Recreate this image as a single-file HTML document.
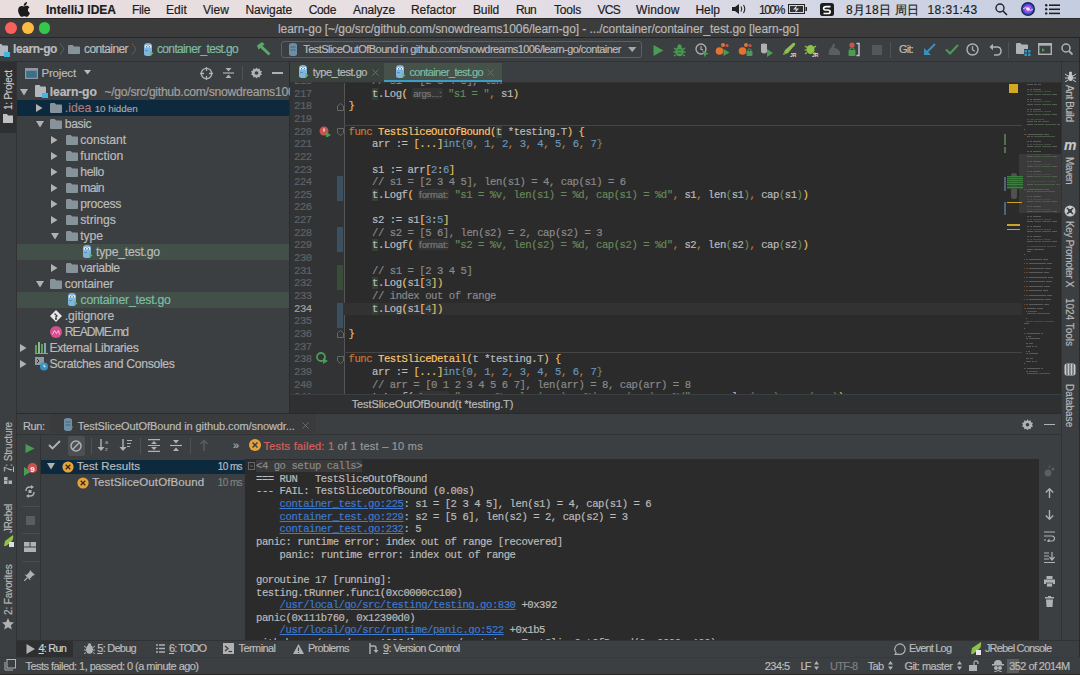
<!DOCTYPE html><html><head><meta charset="utf-8"><style>
html,body{margin:0;padding:0;width:1080px;height:675px;overflow:hidden;background:#3c3f41;position:relative;font-family:"Liberation Sans",sans-serif;}
.c{position:absolute;font-family:"Liberation Mono",monospace;font-size:10.6px;letter-spacing:-0.46px;white-space:pre;color:#b8bcc0;line-height:12.65px;}
.k{color:#cc7832}.fn{color:#ffc66d}.s{color:#6a8759}.n{color:#6897bb}.cm{color:#8a8a8a}.y{color:#e8bf6a}.g{color:#6a8759}
.hint{font-family:"Liberation Sans",sans-serif;font-size:9.5px;letter-spacing:-0.1px;color:#7c7c7c;background:#333435;border-radius:2px;padding:0 1.5px;margin:0 5px 0 4.2px;display:inline-block;line-height:11px;}
.lk{color:#3e7ad0;text-decoration:underline;}
div{-webkit-text-stroke:0.18px currentColor;}
</style></head><body>
<div style="position:absolute;left:0px;top:0px;width:1080px;height:18px;background:linear-gradient(to right,#e9dddd 0%,#e7dfe2 40%,#e3dde4 50%,#d9d9e5 67%,#cfd4e3 82%,#c5cde0 100%);"></div>
<svg style="position:absolute;left:17px;top:2px;" width="13" height="15" viewBox="0 0 13 15"><path d="M9.2 2.4c.6-.8 1-1.8.9-2.4-.9 0-1.9.6-2.5 1.3-.5.6-1 1.6-.9 2.5 1 .1 1.9-.5 2.5-1.4zM10.9 8c0-1.8 1.5-2.7 1.6-2.7-.9-1.3-2.2-1.5-2.7-1.5-1.1-.1-2.2.7-2.8.7-.6 0-1.5-.7-2.4-.6C3.4 3.9 2.3 4.6 1.7 5.7.4 7.9 1.4 11.2 2.6 13c.6.9 1.3 1.9 2.3 1.8.9 0 1.3-.6 2.4-.6s1.4.6 2.4.6c1 0 1.6-.9 2.2-1.8.7-1 1-2 1-2.1 0 0-2-.8-2-2.9z" fill="#1a1a1a"/></svg>
<div id="t1" style="position:absolute;left:46px;top:1.8px;font-family:'Liberation Sans', sans-serif;font-size:12px;line-height:16px;color:#1c1c1c;font-weight:bold;white-space:pre;letter-spacing:-0.001px;">IntelliJ IDEA</div>
<div id="t2" style="position:absolute;left:132px;top:1.8px;font-family:'Liberation Sans', sans-serif;font-size:12px;line-height:16px;color:#1c1c1c;font-weight:normal;white-space:pre;letter-spacing:-0.336px;">File</div>
<div id="t3" style="position:absolute;left:166px;top:1.8px;font-family:'Liberation Sans', sans-serif;font-size:12px;line-height:16px;color:#1c1c1c;font-weight:normal;white-space:pre;letter-spacing:0.078px;">Edit</div>
<div id="t4" style="position:absolute;left:203px;top:1.8px;font-family:'Liberation Sans', sans-serif;font-size:12px;line-height:16px;color:#1c1c1c;font-weight:normal;white-space:pre;letter-spacing:0.051px;">View</div>
<div id="t5" style="position:absolute;left:245.5px;top:1.8px;font-family:'Liberation Sans', sans-serif;font-size:12px;line-height:16px;color:#1c1c1c;font-weight:normal;white-space:pre;letter-spacing:-0.109px;">Navigate</div>
<div id="t6" style="position:absolute;left:308.75px;top:1.8px;font-family:'Liberation Sans', sans-serif;font-size:12px;line-height:16px;color:#1c1c1c;font-weight:normal;white-space:pre;letter-spacing:-0.359px;">Code</div>
<div id="t7" style="position:absolute;left:353px;top:1.8px;font-family:'Liberation Sans', sans-serif;font-size:12px;line-height:16px;color:#1c1c1c;font-weight:normal;white-space:pre;letter-spacing:-0.100px;">Analyze</div>
<div id="t8" style="position:absolute;left:411px;top:1.8px;font-family:'Liberation Sans', sans-serif;font-size:12px;line-height:16px;color:#1c1c1c;font-weight:normal;white-space:pre;letter-spacing:-0.045px;">Refactor</div>
<div id="t9" style="position:absolute;left:473px;top:1.8px;font-family:'Liberation Sans', sans-serif;font-size:12px;line-height:16px;color:#1c1c1c;font-weight:normal;white-space:pre;letter-spacing:-0.138px;">Build</div>
<div id="t10" style="position:absolute;left:516px;top:1.8px;font-family:'Liberation Sans', sans-serif;font-size:12px;line-height:16px;color:#1c1c1c;font-weight:normal;white-space:pre;letter-spacing:-0.672px;">Run</div>
<div id="t11" style="position:absolute;left:554px;top:1.8px;font-family:'Liberation Sans', sans-serif;font-size:12px;line-height:16px;color:#1c1c1c;font-weight:normal;white-space:pre;letter-spacing:-0.203px;">Tools</div>
<div id="t12" style="position:absolute;left:597.5px;top:1.8px;font-family:'Liberation Sans', sans-serif;font-size:12px;line-height:16px;color:#1c1c1c;font-weight:normal;white-space:pre;letter-spacing:-0.729px;">VCS</div>
<div id="t13" style="position:absolute;left:636px;top:1.8px;font-family:'Liberation Sans', sans-serif;font-size:12px;line-height:16px;color:#1c1c1c;font-weight:normal;white-space:pre;letter-spacing:0.135px;">Window</div>
<div id="t14" style="position:absolute;left:695.5px;top:1.8px;font-family:'Liberation Sans', sans-serif;font-size:12px;line-height:16px;color:#1c1c1c;font-weight:normal;white-space:pre;letter-spacing:-0.047px;">Help</div>
<svg style="position:absolute;left:732px;top:4px;" width="15" height="10" viewBox="0 0 15 10"><path d="M0 3h3l4-3v10l-4-3H0z" fill="#222"/><path d="M9 2.5q1.5 2.5 0 5M11.5 1q2.5 4 0 8" stroke="#222" stroke-width="1.1" fill="none"/></svg>
<div id="t15" style="position:absolute;left:759px;top:1.8px;font-family:'Liberation Sans', sans-serif;font-size:12px;line-height:16px;color:#1c1c1c;font-weight:normal;white-space:pre;letter-spacing:-1.426px;">100%</div>
<svg style="position:absolute;left:788px;top:4px;" width="20" height="10" viewBox="0 0 20 10"><rect x="0.5" y="0.5" width="16" height="9" fill="none" stroke="#222" stroke-width="1"/><rect x="17.5" y="3" width="1.5" height="4" fill="#222"/><rect x="2" y="2" width="13" height="6" fill="#333"/><path d="M9 1L5 5.5h3L7 9l4-4.5H8z" fill="#d9d9e5"/></svg>
<svg style="position:absolute;left:820px;top:3px;" width="14" height="13" viewBox="0 0 14 13"><rect width="14" height="13" rx="2.5" fill="#1e1e1e"/><path d="M10.5 3.6H6.2Q3.6 3.6 3.6 5.3T6.2 7h1.6q2.4 0 2.4 1.7T7.8 10.5H3.5" stroke="#fff" stroke-width="1.6" fill="none"/></svg>
<div id="t16" style="position:absolute;left:846px;top:1.8px;font-family:'Liberation Sans', sans-serif;font-size:12px;line-height:16px;color:#1c1c1c;font-weight:normal;white-space:pre;letter-spacing:0.205px;">8月18日 周日</div>
<div id="t17" style="position:absolute;left:927.5px;top:1.8px;font-family:'Liberation Sans', sans-serif;font-size:12px;line-height:16px;color:#1c1c1c;font-weight:normal;white-space:pre;letter-spacing:0.410px;">18:31:43</div>
<svg style="position:absolute;left:995px;top:3px;" width="13" height="13" viewBox="0 0 13 13"><circle cx="5" cy="5" r="4" stroke="#222" stroke-width="1.4" fill="none"/><path d="M8 8l4 4" stroke="#222" stroke-width="1.6"/></svg>
<svg style="position:absolute;left:1021px;top:2px;" width="14" height="14" viewBox="0 0 14 14"><circle cx="7" cy="7" r="7" fill="#1c2450"/><circle cx="7" cy="7" r="5.6" fill="#3a52d8"/><circle cx="7" cy="7" r="3.8" fill="#b050e0"/><circle cx="7" cy="7" r="1.8" fill="#e8e0ff"/><path d="M2 7q2.5-3 5 0t5 0" stroke="#fff" stroke-width="0.9" fill="none" opacity="0.8"/></svg>
<svg style="position:absolute;left:1045px;top:4px;" width="16" height="11" viewBox="0 0 16 11"><g fill="#222"><circle cx="1.2" cy="1.2" r="1.2"/><circle cx="1.2" cy="5.3" r="1.2"/><circle cx="1.2" cy="9.4" r="1.2"/><rect x="4" y="0.4" width="11" height="1.6"/><rect x="4" y="4.5" width="11" height="1.6"/><rect x="4" y="8.6" width="11" height="1.6"/></g></svg>
<div style="position:absolute;left:0px;top:18px;width:1080px;height:19px;background:#3c3c3c;"></div>
<div style="position:absolute;left:0px;top:18px;width:1080px;height:1px;background:#2a2a2a;"></div>
<div style="position:absolute;left:0px;top:36.5px;width:1080px;height:1px;background:#262626;"></div>
<div style="position:absolute;left:5.4px;top:22.4px;width:11.2px;height:11.2px;border-radius:6px;background:#fc605c;"></div>
<div style="position:absolute;left:22.4px;top:22.4px;width:11.2px;height:11.2px;border-radius:6px;background:#fdbc40;"></div>
<div style="position:absolute;left:38.9px;top:22.4px;width:11.2px;height:11.2px;border-radius:6px;background:#34c84a;"></div>
<div id="t18" style="position:absolute;left:278px;top:21px;font-family:'Liberation Sans', sans-serif;font-size:12px;line-height:16px;color:#b8b8b8;font-weight:normal;white-space:pre;letter-spacing:-0.064px;">learn-go [~/go/src/github.com/snowdreams1006/learn-go] - .../container/container_test.go [learn-go]</div>
<div style="position:absolute;left:0px;top:37.5px;width:1080px;height:23.5px;background:#3c3f41;"></div>
<div style="position:absolute;left:0px;top:60.5px;width:1080px;height:1px;background:#323232;"></div>
<svg style="position:absolute;left:-3px;top:44px;" width="14" height="13" viewBox="0 0 14 13"><path d="M0 1Q0 0 1 0H4.5l1 1.4H10Q11 1.4 11 2.4V8H7V12H1Q0 12 0 11z" fill="#b0b8bd"/><rect x="7" y="8" width="6" height="5" fill="#40b6e0"/></svg>
<div id="t19" style="position:absolute;left:13px;top:38px;font-family:'Liberation Sans', sans-serif;font-size:12px;line-height:22px;color:#bbbbbb;font-weight:bold;white-space:pre;letter-spacing:-0.418px;">learn-go</div>
<svg style="position:absolute;left:59px;top:42px;" width="6" height="14" viewBox="0 0 6 14"><path d="M1 1l4 6-4 6" stroke="#5a5d5f" stroke-width="1" fill="none"/></svg>
<svg style="position:absolute;left:68px;top:45px;" width="12" height="9" viewBox="0 0 12 9"><path d="M0 1.2Q0 0 1.2 0H4.8l1.2 1.6H11Q12 1.6 12 2.8V8.2Q12 9 11 9H1Q0 9 0 8z" fill="#87939a"/></svg>
<div id="t20" style="position:absolute;left:84px;top:38px;font-family:'Liberation Sans', sans-serif;font-size:12px;line-height:22px;color:#bbbbbb;font-weight:normal;white-space:pre;letter-spacing:-0.597px;">container</div>
<svg style="position:absolute;left:131px;top:42px;" width="6" height="14" viewBox="0 0 6 14"><path d="M1 1l4 6-4 6" stroke="#5a5d5f" stroke-width="1" fill="none"/></svg>
<svg style="position:absolute;left:142px;top:43px;" width="12" height="13" viewBox="0 0 12 13"><path d="M2 3Q2 0 6 0T10 3V11Q10 13 6 13T2 11z" fill="#7fb6e0"/><circle cx="4.3" cy="3.6" r="1.4" fill="#fff"/><circle cx="7.7" cy="3.6" r="1.4" fill="#fff"/><circle cx="4.5" cy="3.8" r=".6" fill="#222"/><circle cx="7.5" cy="3.8" r=".6" fill="#222"/><path d="M8.5 8l3 2.2-3 2.2z" fill="#5fb85f"/><path d="M3 7h3v1H3z" fill="#5a8fc0"/></svg>
<div id="t21" style="position:absolute;left:157px;top:38px;font-family:'Liberation Sans', sans-serif;font-size:12px;line-height:22px;color:#7dbda4;font-weight:normal;white-space:pre;letter-spacing:-0.651px;">container_test.go</div>
<svg style="position:absolute;left:256px;top:42px;" width="16" height="14" viewBox="0 0 16 14"><path d="M1 3.5L6 0l2.5 2.2-2 1.6 8 7.6-2 2.2-8-7.5-2 1.5z" fill="#59a869"/></svg>
<div style="position:absolute;left:280.5px;top:40.5px;width:361px;height:17.5px;border:1px solid #5e6060;border-radius:3px;background:#3c3f41;box-sizing:border-box;"></div>
<svg style="position:absolute;left:288px;top:43px;" width="10" height="13" viewBox="0 0 10 13"><path d="M1 2Q1 0 5 0T9 2V11Q9 13 5 13T1 11z" fill="#6e8ea6"/><path d="M2.5 4h5M2.5 7h5" stroke="#4a6376" stroke-width="1"/></svg>
<div id="t22" style="position:absolute;left:303.3px;top:40px;font-family:'Liberation Sans', sans-serif;font-size:11px;line-height:18px;color:#bbbbbb;font-weight:normal;white-space:pre;letter-spacing:-0.561px;">TestSliceOutOfBound in github.com/snowdreams1006/learn-go/container</div>
<svg style="position:absolute;left:628px;top:47px;" width="9" height="6" viewBox="0 0 9 6"><path d="M0 0h8.5L4.25 5z" fill="#a8a8a8"/></svg>
<svg style="position:absolute;left:653px;top:45px;" width="11" height="11" viewBox="0 0 11 11"><path d="M0.5 0v11l10-5.5z" fill="#499c54"/></svg>
<svg style="position:absolute;left:673px;top:43.5px;" width="13" height="13" viewBox="0 0 13 13"><ellipse cx="6.5" cy="7.5" rx="4" ry="4.8" fill="#499c54"/><path d="M1 4l2 1.5M12 4l-2 1.5M0.5 8h2.5M12.5 8H10M1 12l2-1.5M12 12l-2-1.5" stroke="#499c54" stroke-width="1.3"/><path d="M4.5 6h4M4.5 9h4" stroke="#2f5234" stroke-width="1"/><circle cx="6.5" cy="2.2" r="2" fill="#499c54"/></svg>
<svg style="position:absolute;left:695px;top:43px;" width="15" height="15" viewBox="0 0 15 15"><circle cx="6" cy="6" r="5" stroke="#b0b0b0" stroke-width="1.3" fill="none"/><path d="M6 3v3.5h2" stroke="#b0b0b0" stroke-width="1.1" fill="none"/><path d="M7 7l7 4-3 .5-1 3z" fill="#499c54"/></svg>
<svg style="position:absolute;left:715px;top:42px;" width="15" height="15" viewBox="0 0 15 15"><circle cx="4.5" cy="9" r="3.8" fill="#e5722f"/><circle cx="8" cy="3" r="2" fill="#e5722f"/><circle cx="12" cy="3.5" r="1.6" fill="#c75450"/><path d="M8.5 7v7l6-3.5z" fill="#499c54"/></svg>
<svg style="position:absolute;left:738px;top:42px;" width="15" height="15" viewBox="0 0 15 15"><circle cx="4.5" cy="9" r="3.8" fill="#e5722f"/><circle cx="8" cy="3" r="2" fill="#e5722f"/><circle cx="12" cy="3.5" r="1.6" fill="#c75450"/><rect x="8.5" y="9" width="6" height="5" rx="1" fill="#499c54"/><path d="M10 9V7.5Q11.5 6 13 7.5V9" stroke="#499c54" fill="none"/></svg>
<svg style="position:absolute;left:760px;top:43px;" width="14" height="14" viewBox="0 0 14 14"><path d="M1 1Q4 0 7 1V9Q4 12 1 9z" fill="#b0b0b0"/><path d="M7 6v8l6-4z" fill="#499c54"/></svg>
<svg style="position:absolute;left:782px;top:42px;" width="15" height="15" viewBox="0 0 15 15"><path d="M1 13L3 8 11 1Q14 0 13 3L6 11z" fill="#8fc14a"/><path d="M1 13l3-1-2-2z" fill="#6a9a3a"/><text x="8" y="14.5" font-family="Liberation Sans" font-size="5" fill="#ddd" font-weight="bold">JR</text></svg>
<svg style="position:absolute;left:804px;top:42px;" width="15" height="15" viewBox="0 0 15 15"><ellipse cx="6.5" cy="7.5" rx="4" ry="4.5" fill="#8fc14a"/><path d="M1 4l2 1.5M12 4l-2 1.5M0.5 8h2.5M12 12l-2-1.5M1 12l2-1.5" stroke="#8fc14a" stroke-width="1.2"/><text x="8" y="14.5" font-family="Liberation Sans" font-size="5" fill="#ddd" font-weight="bold">JR</text></svg>
<svg style="position:absolute;left:827px;top:43px;" width="14" height="13" viewBox="0 0 14 13"><path d="M2 12Q1 7 4 5L6 1Q8 0 8 2L7 5Q11 5 13 9V12z" fill="#5a5e60"/></svg>
<svg style="position:absolute;left:848px;top:42px;" width="12" height="15" viewBox="0 0 12 15"><circle cx="4" cy="3" r="2.6" fill="#c75450"/><rect x="0.5" y="8" width="7" height="6" rx="1" fill="#499c54"/><path d="M2 8V6.5Q4 5 6 6.5V8" stroke="#499c54" fill="none"/><path d="M8.5 1.5h2.5v12H8.5" stroke="#c8c8c8" stroke-width="1.4" fill="none"/></svg>
<div style="position:absolute;left:872px;top:45px;width:10px;height:10px;background:#545759;"></div>
<div style="position:absolute;left:890px;top:42px;width:1px;height:16px;background:#4e5254;"></div>
<div id="t23" style="position:absolute;left:899px;top:40px;font-family:'Liberation Sans', sans-serif;font-size:11px;line-height:18px;color:#bbbbbb;font-weight:normal;white-space:pre;letter-spacing:-0.781px;">Git:</div>
<svg style="position:absolute;left:923px;top:43px;" width="13" height="13" viewBox="0 0 13 13"><path d="M12 1L3 10" stroke="#3592c4" stroke-width="1.8"/><path d="M1 5v7h7z" fill="#3592c4"/></svg>
<svg style="position:absolute;left:945px;top:44px;" width="14" height="11" viewBox="0 0 14 11"><path d="M1 5.5l4 4L13 1" stroke="#499c54" stroke-width="2" fill="none"/></svg>
<svg style="position:absolute;left:966px;top:43px;" width="13" height="13" viewBox="0 0 13 13"><circle cx="6.5" cy="6.5" r="5.5" stroke="#afb1b3" stroke-width="1.4" fill="none"/><path d="M6.5 3.2v3.5l2.3 1.6" stroke="#afb1b3" stroke-width="1.3" fill="none"/></svg>
<svg style="position:absolute;left:989px;top:43px;" width="13" height="13" viewBox="0 0 13 13"><path d="M3 4h5Q12 4 12 8T8 12H5" stroke="#afb1b3" stroke-width="1.5" fill="none"/><path d="M0.5 4L4 0.8V7.2z" fill="#afb1b3"/></svg>
<div style="position:absolute;left:1008px;top:42px;width:1px;height:16px;background:#4e5254;"></div>
<svg style="position:absolute;left:1016px;top:43px;" width="15" height="13" viewBox="0 0 15 13"><path d="M0 1Q0 0 1 0H4.5l1 1.5H11Q12 1.5 12 2.5V6H8V11H1Q0 11 0 10z" fill="#afb1b3"/><rect x="8.5" y="7" width="2.5" height="2.5" fill="#3592c4"/><rect x="12" y="7" width="2.5" height="2.5" fill="#3592c4"/><rect x="8.5" y="10.5" width="2.5" height="2.5" fill="#3592c4"/><rect x="12" y="10.5" width="2.5" height="2.5" fill="#3592c4"/></svg>
<svg style="position:absolute;left:1038px;top:43px;" width="14" height="12" viewBox="0 0 14 12"><rect x="0.7" y="0.7" width="12.6" height="10.6" stroke="#afb1b3" stroke-width="1.4" fill="none"/><rect x="0.7" y="0.7" width="12.6" height="2" fill="#afb1b3"/><path d="M4 5l3 2-3 2z" fill="#499c54"/></svg>
<svg style="position:absolute;left:1061px;top:43px;" width="12" height="12" viewBox="0 0 12 12"><circle cx="5" cy="5" r="4" stroke="#afb1b3" stroke-width="1.5" fill="none"/><path d="M8 8l3.5 3.5" stroke="#afb1b3" stroke-width="1.8"/></svg>
<div style="position:absolute;left:0px;top:61.5px;width:16px;height:596px;background:#3c3f41;"></div>
<div style="position:absolute;left:16px;top:61.5px;width:1px;height:596px;background:#323232;"></div>
<div style="position:absolute;left:0px;top:61.5px;width:16px;height:71px;background:#2d2f31;"></div>
<div id="v24" style="position:absolute;left:2.3px;top:109.6px;height:14px;transform-origin:0 0;transform:rotate(-90deg);font-family:'Liberation Sans',sans-serif;font-size:10px;line-height:14px;color:#c8c8c8;white-space:pre;letter-spacing:-0.245px;">1: Project</div>
<svg style="position:absolute;left:3px;top:114px;" width="10" height="9" viewBox="0 0 10 9"><path d="M0 0h4l1 1.5h5V9H0z" fill="#c0c0c0"/></svg>
<div id="v25" style="position:absolute;left:2.3px;top:471.5px;height:14px;transform-origin:0 0;transform:rotate(-90deg);font-family:'Liberation Sans',sans-serif;font-size:10px;line-height:14px;color:#b8b8b8;white-space:pre;letter-spacing:-0.142px;"><u>7</u>: Structure</div>
<svg style="position:absolute;left:4px;top:477px;" width="8" height="7" viewBox="0 0 8 7"><rect x="0" y="3.5" width="3.5" height="3.5" fill="#b0b0b0"/><rect x="4.5" y="3.5" width="3.5" height="3.5" fill="#b0b0b0"/><rect x="0" y="0" width="3.5" height="3" fill="#b0b0b0"/></svg>
<div id="v26" style="position:absolute;left:2.3px;top:532.5px;height:14px;transform-origin:0 0;transform:rotate(-90deg);font-family:'Liberation Sans',sans-serif;font-size:10px;line-height:14px;color:#b8b8b8;white-space:pre;letter-spacing:-0.357px;">JRebel</div>
<svg style="position:absolute;left:3px;top:535px;" width="11" height="12" viewBox="0 0 11 12"><path d="M1 11L2 6 10 0Q11 4 8 7L3 11z" fill="#8fc14a"/><rect x="6" y="7" width="5" height="5" fill="#ddd"/></svg>
<div id="v27" style="position:absolute;left:2.3px;top:615.3px;height:14px;transform-origin:0 0;transform:rotate(-90deg);font-family:'Liberation Sans',sans-serif;font-size:10px;line-height:14px;color:#b8b8b8;white-space:pre;letter-spacing:-0.146px;">2: Favorites</div>
<svg style="position:absolute;left:2px;top:618px;" width="12" height="12" viewBox="0 0 12 12"><path d="M6 0l1.8 4 4.2.4-3.2 2.8 1 4.3L6 9.2 2.2 11.5l1-4.3L0 4.4 4.2 4z" fill="#b0b0b0"/></svg>
<div style="position:absolute;left:17px;top:61.5px;width:272px;height:351px;background:#3c3f41;"></div>
<div style="position:absolute;left:288.5px;top:61.5px;width:1.5px;height:351px;background:#2b2b2b;"></div>
<svg style="position:absolute;left:25px;top:67.5px;" width="13" height="11" viewBox="0 0 13 11"><rect x="0.6" y="0.6" width="11.8" height="9.8" stroke="#8d9aa3" stroke-width="1.2" fill="#3c6f8a"/><rect x="0.6" y="0.6" width="11.8" height="2.2" fill="#8d9aa3"/></svg>
<div id="t28" style="position:absolute;left:41.5px;top:64px;font-family:'Liberation Sans', sans-serif;font-size:11.5px;line-height:18px;color:#bbbbbb;font-weight:normal;white-space:pre;letter-spacing:-0.200px;">Project</div>
<svg style="position:absolute;left:83.5px;top:70px;" width="7" height="5" viewBox="0 0 7 5"><path d="M0 0h7L3.5 4.5z" fill="#bbb"/></svg>
<svg style="position:absolute;left:199.5px;top:67px;" width="13" height="13" viewBox="0 0 13 13"><circle cx="6.5" cy="6.5" r="5.2" stroke="#afb1b3" stroke-width="1.3" fill="none"/><path d="M6.5 0v4M6.5 9v4M0 6.5h4M9 6.5h4" stroke="#afb1b3" stroke-width="1.3"/></svg>
<svg style="position:absolute;left:222.5px;top:67px;" width="11" height="12" viewBox="0 0 11 12"><path d="M0 6h11" stroke="#afb1b3" stroke-width="1.2"/><path d="M2.5 1h6L5.5 4.5zM2.5 11h6L5.5 7.5z" fill="#afb1b3"/></svg>
<div style="position:absolute;left:242px;top:66px;width:1px;height:14px;background:#4e5254;"></div>
<svg style="position:absolute;left:250.5px;top:67px;" width="11" height="12" viewBox="0 0 11 12"><path d="M5.5 0.5l1.2 1.6 2-.6.3 2 2 .8-1 1.7 1 1.7-2 .8-.3 2-2-.6-1.2 1.6-1.2-1.6-2 .6-.3-2-2-.8 1-1.7-1-1.7 2-.8.3-2 2 .6z" fill="#afb1b3"/><circle cx="5.5" cy="6" r="1.8" fill="#3c3f41"/></svg>
<div style="position:absolute;left:272px;top:72px;width:11px;height:1.5px;background:#afb1b3;"></div>
<div style="position:absolute;left:17px;top:99.8px;width:271.5px;height:16px;background:#0d293e;"></div>
<div style="position:absolute;left:17px;top:243.8px;width:271.5px;height:16px;background:#43504a;"></div>
<div style="position:absolute;left:17px;top:291.8px;width:271.5px;height:16px;background:#43504a;"></div>
<svg style="position:absolute;left:20px;top:88.8px;" width="8" height="7" viewBox="0 0 8 7"><path d="M0 0h8L4 6.5z" fill="#b2b2b2"/></svg>
<svg style="position:absolute;left:34.5px;top:85.3px;" width="14" height="13" viewBox="0 0 14 13"><path d="M0 1Q0 0 1 0H4.5l1 1.4H10Q11 1.4 11 2.4V8H7V12H1Q0 12 0 11z" fill="#b0b8bd"/><rect x="7" y="8" width="6" height="5" fill="#40b6e0"/></svg>
<div id="t29" style="position:absolute;left:49.8px;top:83.8px;font-family:'Liberation Sans', sans-serif;font-size:12.2px;line-height:16px;color:#bbbbbb;font-weight:bold;white-space:pre;letter-spacing:-0.147px;">learn-go</div>
<div id="t30" style="position:absolute;left:104.4px;top:83.8px;font-family:'Liberation Sans', sans-serif;font-size:12.2px;line-height:16px;color:#a0a0a0;font-weight:normal;white-space:pre;letter-spacing:-0.288px;">~/go/src/github.com/snowdreams100</div>
<svg style="position:absolute;left:35.5px;top:103.8px;" width="7" height="8" viewBox="0 0 7 8"><path d="M0 0v8l6.5-4z" fill="#b2b2b2"/></svg>
<svg style="position:absolute;left:50.0px;top:102.8px;" width="12" height="10" viewBox="0 0 12 10"><path d="M0 1.2Q0 0 1.2 0H4.8l1.2 1.6H11Q12 1.6 12 2.8V9.2Q12 10 11 10H1Q0 10 0 9z" fill="#87939a"/></svg>
<div style="position:absolute;left:64.8px;top:99.8px;font-family:'Liberation Sans', sans-serif;font-size:12.2px;line-height:16px;color:#bbbbbb;font-weight:normal;white-space:pre;"><span style="color:#b07a7a">.idea</span> <span style="font-size:9.8px;color:#a8a8a8">10 hidden</span></div>
<svg style="position:absolute;left:35.5px;top:120.8px;" width="8" height="7" viewBox="0 0 8 7"><path d="M0 0h8L4 6.5z" fill="#b2b2b2"/></svg>
<svg style="position:absolute;left:50.0px;top:118.8px;" width="12" height="10" viewBox="0 0 12 10"><path d="M0 1.2Q0 0 1.2 0H4.8l1.2 1.6H11Q12 1.6 12 2.8V9.2Q12 10 11 10H1Q0 10 0 9z" fill="#87939a"/></svg>
<div id="t31" style="position:absolute;left:64.8px;top:115.8px;font-family:'Liberation Sans', sans-serif;font-size:12.2px;line-height:16px;color:#bbbbbb;font-weight:normal;white-space:pre;letter-spacing:-0.411px;">basic</div>
<svg style="position:absolute;left:51.0px;top:135.8px;" width="7" height="8" viewBox="0 0 7 8"><path d="M0 0v8l6.5-4z" fill="#b2b2b2"/></svg>
<svg style="position:absolute;left:65.5px;top:134.8px;" width="12" height="10" viewBox="0 0 12 10"><path d="M0 1.2Q0 0 1.2 0H4.8l1.2 1.6H11Q12 1.6 12 2.8V9.2Q12 10 11 10H1Q0 10 0 9z" fill="#87939a"/></svg>
<div id="t32" style="position:absolute;left:80.3px;top:131.8px;font-family:'Liberation Sans', sans-serif;font-size:12.2px;line-height:16px;color:#bbbbbb;font-weight:normal;white-space:pre;letter-spacing:-0.035px;">constant</div>
<svg style="position:absolute;left:51.0px;top:151.8px;" width="7" height="8" viewBox="0 0 7 8"><path d="M0 0v8l6.5-4z" fill="#b2b2b2"/></svg>
<svg style="position:absolute;left:65.5px;top:150.8px;" width="12" height="10" viewBox="0 0 12 10"><path d="M0 1.2Q0 0 1.2 0H4.8l1.2 1.6H11Q12 1.6 12 2.8V9.2Q12 10 11 10H1Q0 10 0 9z" fill="#87939a"/></svg>
<div id="t33" style="position:absolute;left:80.3px;top:147.8px;font-family:'Liberation Sans', sans-serif;font-size:12.2px;line-height:16px;color:#bbbbbb;font-weight:normal;white-space:pre;letter-spacing:0.039px;">function</div>
<svg style="position:absolute;left:51.0px;top:167.8px;" width="7" height="8" viewBox="0 0 7 8"><path d="M0 0v8l6.5-4z" fill="#b2b2b2"/></svg>
<svg style="position:absolute;left:65.5px;top:166.8px;" width="12" height="10" viewBox="0 0 12 10"><path d="M0 1.2Q0 0 1.2 0H4.8l1.2 1.6H11Q12 1.6 12 2.8V9.2Q12 10 11 10H1Q0 10 0 9z" fill="#87939a"/></svg>
<div id="t34" style="position:absolute;left:80.3px;top:163.8px;font-family:'Liberation Sans', sans-serif;font-size:12.2px;line-height:16px;color:#bbbbbb;font-weight:normal;white-space:pre;letter-spacing:-0.430px;">hello</div>
<svg style="position:absolute;left:51.0px;top:183.8px;" width="7" height="8" viewBox="0 0 7 8"><path d="M0 0v8l6.5-4z" fill="#b2b2b2"/></svg>
<svg style="position:absolute;left:65.5px;top:182.8px;" width="12" height="10" viewBox="0 0 12 10"><path d="M0 1.2Q0 0 1.2 0H4.8l1.2 1.6H11Q12 1.6 12 2.8V9.2Q12 10 11 10H1Q0 10 0 9z" fill="#87939a"/></svg>
<div id="t35" style="position:absolute;left:80.3px;top:179.8px;font-family:'Liberation Sans', sans-serif;font-size:12.2px;line-height:16px;color:#bbbbbb;font-weight:normal;white-space:pre;letter-spacing:-0.705px;">main</div>
<svg style="position:absolute;left:51.0px;top:199.8px;" width="7" height="8" viewBox="0 0 7 8"><path d="M0 0v8l6.5-4z" fill="#b2b2b2"/></svg>
<svg style="position:absolute;left:65.5px;top:198.8px;" width="12" height="10" viewBox="0 0 12 10"><path d="M0 1.2Q0 0 1.2 0H4.8l1.2 1.6H11Q12 1.6 12 2.8V9.2Q12 10 11 10H1Q0 10 0 9z" fill="#87939a"/></svg>
<div id="t36" style="position:absolute;left:80.3px;top:195.8px;font-family:'Liberation Sans', sans-serif;font-size:12.2px;line-height:16px;color:#bbbbbb;font-weight:normal;white-space:pre;letter-spacing:-0.270px;">process</div>
<svg style="position:absolute;left:51.0px;top:215.8px;" width="7" height="8" viewBox="0 0 7 8"><path d="M0 0v8l6.5-4z" fill="#b2b2b2"/></svg>
<svg style="position:absolute;left:65.5px;top:214.8px;" width="12" height="10" viewBox="0 0 12 10"><path d="M0 1.2Q0 0 1.2 0H4.8l1.2 1.6H11Q12 1.6 12 2.8V9.2Q12 10 11 10H1Q0 10 0 9z" fill="#87939a"/></svg>
<div id="t37" style="position:absolute;left:80.3px;top:211.8px;font-family:'Liberation Sans', sans-serif;font-size:12.2px;line-height:16px;color:#bbbbbb;font-weight:normal;white-space:pre;letter-spacing:-0.058px;">strings</div>
<svg style="position:absolute;left:51.0px;top:232.8px;" width="8" height="7" viewBox="0 0 8 7"><path d="M0 0h8L4 6.5z" fill="#b2b2b2"/></svg>
<svg style="position:absolute;left:65.5px;top:230.8px;" width="12" height="10" viewBox="0 0 12 10"><path d="M0 1.2Q0 0 1.2 0H4.8l1.2 1.6H11Q12 1.6 12 2.8V9.2Q12 10 11 10H1Q0 10 0 9z" fill="#87939a"/></svg>
<div id="t38" style="position:absolute;left:80.3px;top:227.8px;font-family:'Liberation Sans', sans-serif;font-size:12.2px;line-height:16px;color:#bbbbbb;font-weight:normal;white-space:pre;letter-spacing:-0.087px;">type</div>
<svg style="position:absolute;left:81.0px;top:245.3px;" width="12" height="13" viewBox="0 0 12 13"><path d="M2 3Q2 0 6 0T10 3V11Q10 13 6 13T2 11z" fill="#7fb6e0"/><circle cx="4.3" cy="3.6" r="1.4" fill="#fff"/><circle cx="7.7" cy="3.6" r="1.4" fill="#fff"/><circle cx="4.5" cy="3.8" r=".6" fill="#222"/><circle cx="7.5" cy="3.8" r=".6" fill="#222"/><path d="M8.5 8l3 2.2-3 2.2z" fill="#5fb85f"/><path d="M3 7h3v1H3z" fill="#5a8fc0"/></svg>
<div id="t39" style="position:absolute;left:96.0px;top:243.8px;font-family:'Liberation Sans', sans-serif;font-size:12.2px;line-height:16px;color:#bbbbbb;font-weight:normal;white-space:pre;letter-spacing:-0.209px;">type_test.go</div>
<svg style="position:absolute;left:51.0px;top:263.8px;" width="7" height="8" viewBox="0 0 7 8"><path d="M0 0v8l6.5-4z" fill="#b2b2b2"/></svg>
<svg style="position:absolute;left:65.5px;top:262.8px;" width="12" height="10" viewBox="0 0 12 10"><path d="M0 1.2Q0 0 1.2 0H4.8l1.2 1.6H11Q12 1.6 12 2.8V9.2Q12 10 11 10H1Q0 10 0 9z" fill="#87939a"/></svg>
<div id="t40" style="position:absolute;left:80.3px;top:259.8px;font-family:'Liberation Sans', sans-serif;font-size:12.2px;line-height:16px;color:#bbbbbb;font-weight:normal;white-space:pre;letter-spacing:-0.411px;">variable</div>
<svg style="position:absolute;left:35.5px;top:280.8px;" width="8" height="7" viewBox="0 0 8 7"><path d="M0 0h8L4 6.5z" fill="#b2b2b2"/></svg>
<svg style="position:absolute;left:50.0px;top:278.8px;" width="12" height="10" viewBox="0 0 12 10"><path d="M0 1.2Q0 0 1.2 0H4.8l1.2 1.6H11Q12 1.6 12 2.8V9.2Q12 10 11 10H1Q0 10 0 9z" fill="#87939a"/></svg>
<div id="t41" style="position:absolute;left:64.8px;top:275.8px;font-family:'Liberation Sans', sans-serif;font-size:12.2px;line-height:16px;color:#bbbbbb;font-weight:normal;white-space:pre;letter-spacing:-0.171px;">container</div>
<svg style="position:absolute;left:65.5px;top:293.3px;" width="12" height="13" viewBox="0 0 12 13"><path d="M2 3Q2 0 6 0T10 3V11Q10 13 6 13T2 11z" fill="#7fb6e0"/><circle cx="4.3" cy="3.6" r="1.4" fill="#fff"/><circle cx="7.7" cy="3.6" r="1.4" fill="#fff"/><circle cx="4.5" cy="3.8" r=".6" fill="#222"/><circle cx="7.5" cy="3.8" r=".6" fill="#222"/><path d="M8.5 8l3 2.2-3 2.2z" fill="#5fb85f"/><path d="M3 7h3v1H3z" fill="#5a8fc0"/></svg>
<div id="t42" style="position:absolute;left:80.5px;top:291.8px;font-family:'Liberation Sans', sans-serif;font-size:12.2px;line-height:16px;color:#7dbda4;font-weight:normal;white-space:pre;letter-spacing:-0.195px;">container_test.go</div>
<svg style="position:absolute;left:50.0px;top:309.8px;" width="12" height="12" viewBox="0 0 12 12"><path d="M6 0l6 6-6 6-6-6z" fill="#e8e8e8"/><path d="M4.5 3.5l3 3M6 6v3" stroke="#3c3f41" stroke-width="1.2"/><circle cx="6" cy="9" r="1" fill="#3c3f41"/></svg>
<div id="t43" style="position:absolute;left:64.8px;top:307.8px;font-family:'Liberation Sans', sans-serif;font-size:12.2px;line-height:16px;color:#bbbbbb;font-weight:normal;white-space:pre;letter-spacing:-0.074px;">.gitignore</div>
<svg style="position:absolute;left:50.0px;top:325.8px;" width="12" height="12" viewBox="0 0 12 12"><circle cx="6" cy="6" r="6" fill="#d6508f"/><path d="M2.5 8.5l2-4 2 3 2-3 1 4" stroke="#f0c0d8" stroke-width="1" fill="none"/></svg>
<div id="t44" style="position:absolute;left:64.8px;top:323.8px;font-family:'Liberation Sans', sans-serif;font-size:12.2px;line-height:16px;color:#bbbbbb;font-weight:normal;white-space:pre;letter-spacing:-1.019px;">README.md</div>
<svg style="position:absolute;left:20.0px;top:343.8px;" width="7" height="8" viewBox="0 0 7 8"><path d="M0 0v8l6.5-4z" fill="#b2b2b2"/></svg>
<svg style="position:absolute;left:34.5px;top:341.8px;" width="13" height="12" viewBox="0 0 13 12"><rect x="0" y="3" width="2" height="9" fill="#5aa05a"/><rect x="3" y="0" width="2" height="12" fill="#8fb88f"/><rect x="6" y="2" width="2" height="10" fill="#5aa05a"/><rect x="9" y="1" width="2" height="11" fill="#88a0b0"/><rect x="0" y="11" width="13" height="1" fill="#999"/></svg>
<div id="t45" style="position:absolute;left:49.5px;top:339.8px;font-family:'Liberation Sans', sans-serif;font-size:12.2px;line-height:16px;color:#bbbbbb;font-weight:normal;white-space:pre;letter-spacing:-0.330px;">External Libraries</div>
<svg style="position:absolute;left:20.0px;top:359.8px;" width="7" height="8" viewBox="0 0 7 8"><path d="M0 0v8l6.5-4z" fill="#b2b2b2"/></svg>
<svg style="position:absolute;left:34.5px;top:356.8px;" width="13" height="14" viewBox="0 0 13 14"><rect x="0" y="0" width="9" height="8" fill="#8d9aa3"/><path d="M2 2l2 2-2 2" stroke="#333" fill="none"/><circle cx="9" cy="9.5" r="4" fill="#3592c4"/><path d="M9 7.5v2.2h1.5" stroke="#fff" stroke-width=".9" fill="none"/></svg>
<div id="t46" style="position:absolute;left:49.5px;top:355.8px;font-family:'Liberation Sans', sans-serif;font-size:12.2px;line-height:16px;color:#bbbbbb;font-weight:normal;white-space:pre;letter-spacing:-0.323px;">Scratches and Consoles</div>
<div style="position:absolute;left:290px;top:61.5px;width:771px;height:20.5px;background:#3c3f41;"></div>
<div style="position:absolute;left:290px;top:81.5px;width:771px;height:1px;background:#323232;"></div>
<div style="position:absolute;left:290px;top:62.5px;width:94px;height:19px;background:#3a423d;"></div>
<div style="position:absolute;left:384px;top:62.5px;width:118px;height:19px;background:#46514a;"></div>
<div style="position:absolute;left:384px;top:79.5px;width:118px;height:2.5px;background:#3d9ec4;"></div>
<svg style="position:absolute;left:297px;top:65px;" width="12" height="13" viewBox="0 0 12 13"><path d="M2 3Q2 0 6 0T10 3V11Q10 13 6 13T2 11z" fill="#7fb6e0"/><circle cx="4.3" cy="3.6" r="1.4" fill="#fff"/><circle cx="7.7" cy="3.6" r="1.4" fill="#fff"/><circle cx="4.5" cy="3.8" r=".6" fill="#222"/><circle cx="7.5" cy="3.8" r=".6" fill="#222"/><path d="M8.5 8l3 2.2-3 2.2z" fill="#5fb85f"/><path d="M3 7h3v1H3z" fill="#5a8fc0"/></svg>
<div id="t47" style="position:absolute;left:312.7px;top:63px;font-family:'Liberation Sans', sans-serif;font-size:11px;line-height:18px;color:#bbbbbb;font-weight:normal;white-space:pre;letter-spacing:-0.470px;">type_test.go</div>
<svg style="position:absolute;left:372px;top:69px;" width="7" height="7" viewBox="0 0 7 7"><path d="M0.5 0.5l6 6M6.5 0.5l-6 6" stroke="#6b6d6e" stroke-width="1"/></svg>
<svg style="position:absolute;left:394px;top:65px;" width="12" height="13" viewBox="0 0 12 13"><path d="M2 3Q2 0 6 0T10 3V11Q10 13 6 13T2 11z" fill="#7fb6e0"/><circle cx="4.3" cy="3.6" r="1.4" fill="#fff"/><circle cx="7.7" cy="3.6" r="1.4" fill="#fff"/><circle cx="4.5" cy="3.8" r=".6" fill="#222"/><circle cx="7.5" cy="3.8" r=".6" fill="#222"/><path d="M8.5 8l3 2.2-3 2.2z" fill="#5fb85f"/><path d="M3 7h3v1H3z" fill="#5a8fc0"/></svg>
<div id="t48" style="position:absolute;left:409.5px;top:63px;font-family:'Liberation Sans', sans-serif;font-size:11px;line-height:18px;color:#7dbda4;font-weight:normal;white-space:pre;letter-spacing:-0.647px;">container_test.go</div>
<svg style="position:absolute;left:487px;top:69px;" width="7" height="7" viewBox="0 0 7 7"><path d="M0.5 0.5l6 6M6.5 0.5l-6 6" stroke="#6b6d6e" stroke-width="1"/></svg>
<div style="position:absolute;left:0;top:0;width:1080px;height:675px;clip-path:inset(82.5px 19px 281px 290px)">
<div style="position:absolute;left:290px;top:82.5px;width:771px;height:312px;background:#2b2b2b;"></div>
<div style="position:absolute;left:290px;top:82.5px;width:54px;height:312px;background:#313335;"></div>
<div style="position:absolute;left:343.5px;top:82.5px;width:0.8px;height:312px;background:#555555;"></div>
<div style="position:absolute;left:344px;top:302.65px;width:678px;height:12.65px;background:#323232;"></div>
<div style="position:absolute;left:337px;top:176.14999999999998px;width:6px;height:25.3px;background:#3b5060;"></div>
<div style="position:absolute;left:337px;top:226.75px;width:6px;height:25.3px;background:#3b5060;"></div>
<div style="position:absolute;left:337px;top:264.7px;width:6px;height:25.3px;background:#384d38;"></div>
<div style="position:absolute;left:337px;top:302.65px;width:6px;height:25.3px;background:#3b5060;"></div>
<div style="position:absolute;left:344px;top:124.55px;width:678px;height:1px;background:#454545;"></div>
<div style="position:absolute;left:344px;top:352.25px;width:678px;height:1px;background:#454545;"></div>
<div class="c" style="left:294px;top:74.95px;color:#606366">216</div>
<div class="c" style="left:294px;top:87.60px;color:#606366">217</div>
<div class="c" style="left:294px;top:100.25px;color:#606366">218</div>
<div class="c" style="left:294px;top:112.90px;color:#606366">219</div>
<div class="c" style="left:294px;top:125.55px;color:#606366">220</div>
<div class="c" style="left:294px;top:138.20px;color:#606366">221</div>
<div class="c" style="left:294px;top:150.85px;color:#606366">222</div>
<div class="c" style="left:294px;top:163.50px;color:#606366">223</div>
<div class="c" style="left:294px;top:176.15px;color:#606366">224</div>
<div class="c" style="left:294px;top:188.80px;color:#606366">225</div>
<div class="c" style="left:294px;top:201.45px;color:#606366">226</div>
<div class="c" style="left:294px;top:214.10px;color:#606366">227</div>
<div class="c" style="left:294px;top:226.75px;color:#606366">228</div>
<div class="c" style="left:294px;top:239.40px;color:#606366">229</div>
<div class="c" style="left:294px;top:252.05px;color:#606366">230</div>
<div class="c" style="left:294px;top:264.70px;color:#606366">231</div>
<div class="c" style="left:294px;top:277.35px;color:#606366">232</div>
<div class="c" style="left:294px;top:290.00px;color:#606366">233</div>
<div class="c" style="left:294px;top:302.65px;color:#a4a3a3">234</div>
<div class="c" style="left:294px;top:315.30px;color:#606366">235</div>
<div class="c" style="left:294px;top:327.95px;color:#606366">236</div>
<div class="c" style="left:294px;top:340.60px;color:#606366">237</div>
<div class="c" style="left:294px;top:353.25px;color:#606366">238</div>
<div class="c" style="left:294px;top:365.90px;color:#606366">239</div>
<div class="c" style="left:294px;top:378.55px;color:#606366">240</div>
<div class="c" style="left:294px;top:391.20px;color:#606366">241</div>
<svg style="position:absolute;left:318.5px;top:125.5px;" width="12" height="11" viewBox="0 0 12 11"><circle cx="5" cy="5" r="4.5" fill="#c75450"/><path d="M5 2.5v3" stroke="#fff" stroke-width="1.2"/><path d="M7 6v6l5-3z" fill="#499c54"/></svg>
<svg style="position:absolute;left:316px;top:352px;" width="13" height="12" viewBox="0 0 13 12"><circle cx="5" cy="5" r="4" stroke="#499c54" stroke-width="1.8" fill="none"/><path d="M7 6v6l5-3z" fill="#499c54"/></svg>
<svg style="position:absolute;left:337px;top:102.75px;" width="7" height="8" viewBox="0 0 7 8"><path d="M0.5 7.5h6v-4.5l-3-2.5-3 2.5z" stroke="#6c6c6c" stroke-width="0.9" fill="#313335"/></svg>
<svg style="position:absolute;left:337px;top:128.05px;" width="7" height="8" viewBox="0 0 7 8"><path d="M0.5 0.5h6v4.5l-3 2.5-3-2.5z" stroke="#6c6c6c" stroke-width="0.9" fill="#313335"/></svg>
<svg style="position:absolute;left:337px;top:330.45px;" width="7" height="8" viewBox="0 0 7 8"><path d="M0.5 7.5h6v-4.5l-3-2.5-3 2.5z" stroke="#6c6c6c" stroke-width="0.9" fill="#313335"/></svg>
<svg style="position:absolute;left:337px;top:355.75px;" width="7" height="8" viewBox="0 0 7 8"><path d="M0.5 0.5h6v4.5l-3 2.5-3-2.5z" stroke="#6c6c6c" stroke-width="0.9" fill="#313335"/></svg>
<div class="c" style="left:348.5px;top:74.95px;">    <span class="cm">// s1 = [2 3 4 5], len</span></div>
<div class="c" style="left:348.5px;top:87.60px;">    <span style="background:#344036">t</span>.Log<span class="y">(</span><span class="hint">args...:</span><span class="s">"s1 = "</span><span class="k">,</span> s1<span class="y">)</span></div>
<div class="c" style="left:348.5px;top:100.25px;"><span class="y">}</span></div>
<div class="c" style="left:348.5px;top:125.55px;"><span class="k">func</span> <span class="fn">TestSliceOutOfBound</span><span class="y">(</span><span style="background:#344036">t</span> *testing.T<span class="y">)</span> <span class="y">{</span></div>
<div class="c" style="left:348.5px;top:138.20px;">    arr := <span class="y">[...]</span><span class="n">int</span><span class="g">{</span><span class="n">0</span><span class="k">,</span> <span class="n">1</span><span class="k">,</span> <span class="n">2</span><span class="k">,</span> <span class="n">3</span><span class="k">,</span> <span class="n">4</span><span class="k">,</span> <span class="n">5</span><span class="k">,</span> <span class="n">6</span><span class="k">,</span> <span class="n">7</span><span class="g">}</span></div>
<div class="c" style="left:348.5px;top:163.50px;">    s1 := arr<span class="y">[</span><span class="n">2</span>:<span class="n">6</span><span class="y">]</span></div>
<div class="c" style="left:348.5px;top:176.15px;">    <span class="cm">// s1 = [2 3 4 5], len(s1) = 4, cap(s1) = 6</span></div>
<div class="c" style="left:348.5px;top:188.80px;">    <span style="background:#344036">t</span>.Logf<span class="y">(</span><span class="hint">format:</span><span class="s">"s1 = %v, len(s1) = %d, cap(s1) = %d"</span><span class="k">,</span> s1<span class="k">,</span> len<span class="g">(</span>s1<span class="g">)</span><span class="k">,</span> cap<span class="g">(</span>s1<span class="g">)</span><span class="y">)</span></div>
<div class="c" style="left:348.5px;top:214.10px;">    s2 := s1<span class="y">[</span><span class="n">3</span>:<span class="n">5</span><span class="y">]</span></div>
<div class="c" style="left:348.5px;top:226.75px;">    <span class="cm">// s2 = [5 6], len(s2) = 2, cap(s2) = 3</span></div>
<div class="c" style="left:348.5px;top:239.40px;">    <span style="background:#344036">t</span>.Logf<span class="y">(</span><span class="hint">format:</span><span class="s">"s2 = %v, len(s2) = %d, cap(s2) = %d"</span><span class="k">,</span> s2<span class="k">,</span> len<span class="g">(</span>s2<span class="g">)</span><span class="k">,</span> cap<span class="g">(</span>s2<span class="g">)</span><span class="y">)</span></div>
<div class="c" style="left:348.5px;top:264.70px;">    <span class="cm">// s1 = [2 3 4 5]</span></div>
<div class="c" style="left:348.5px;top:277.35px;">    <span style="background:#344036">t</span>.Log<span class="y">(</span>s1<span class="y">[</span><span class="n">3</span><span class="y">]</span><span class="y">)</span></div>
<div class="c" style="left:348.5px;top:290.00px;">    <span class="cm">// index out of range</span></div>
<div class="c" style="left:348.5px;top:302.65px;">    <span style="background:#344036">t</span>.Log<span class="y">(</span>s1<span class="y">[</span><span class="n">4</span><span class="y">]</span><span class="y">)</span></div>
<div class="c" style="left:348.5px;top:327.95px;"><span class="y">}</span></div>
<div class="c" style="left:348.5px;top:353.25px;"><span class="k">func</span> <span class="fn">TestSliceDetail</span><span class="y">(</span>t *testing.T<span class="y">)</span> <span class="y">{</span></div>
<div class="c" style="left:348.5px;top:365.90px;">    arr := <span class="y">[...]</span><span class="n">int</span><span class="g">{</span><span class="n">0</span><span class="k">,</span> <span class="n">1</span><span class="k">,</span> <span class="n">2</span><span class="k">,</span> <span class="n">3</span><span class="k">,</span> <span class="n">4</span><span class="k">,</span> <span class="n">5</span><span class="k">,</span> <span class="n">6</span><span class="k">,</span> <span class="n">7</span><span class="g">}</span></div>
<div class="c" style="left:348.5px;top:378.55px;">    <span class="cm">// arr = [0 1 2 3 4 5 6 7], len(arr) = 8, cap(arr) = 8</span></div>
<div class="c" style="left:348.5px;top:391.20px;">    t.Logf<span class="y">(</span><span class="hint">format:</span><span class="s">"arr = %v, len(arr) = %d, cap(arr) = %d"</span><span class="k">,</span> arr<span class="k">,</span> len<span class="g">(</span>arr<span class="g">)</span><span class="k">,</span> cap<span class="g">(</span>arr<span class="g">)</span><span class="y">)</span></div>
<div style="position:absolute;left:1019px;top:154.3px;width:42px;height:59.2px;background:#3a3a3a;"></div>
<div style="position:absolute;left:1027.3px;top:83.5px;width:5.4px;height:1.2px;background:#5a5a5a;"></div>
<div style="position:absolute;left:1033.6px;top:83.5px;width:3.6px;height:1.2px;background:#5a5a5a;"></div>
<div style="position:absolute;left:1038.1px;top:83.5px;width:2.7px;height:1.2px;background:#5a5a5a;"></div>
<div style="position:absolute;left:1027.3px;top:88.5px;width:1.8px;height:1.2px;background:#5a5a5a;"></div>
<div style="position:absolute;left:1030.0px;top:88.5px;width:1.8px;height:1.2px;background:#5a5a5a;"></div>
<div style="position:absolute;left:1032.7px;top:88.5px;width:8.1px;height:1.2px;background:#5a5a5a;"></div>
<div style="position:absolute;left:1027.3px;top:91.0px;width:1.8px;height:1.2px;background:#484848;"></div>
<div style="position:absolute;left:1030.0px;top:91.0px;width:1.8px;height:1.2px;background:#484848;"></div>
<div style="position:absolute;left:1032.7px;top:91.0px;width:9.9px;height:1.2px;background:#484848;"></div>
<div style="position:absolute;left:1043.5px;top:91.0px;width:7.2px;height:1.2px;background:#484848;"></div>
<div style="position:absolute;left:1027.3px;top:93.5px;width:5.4px;height:1.2px;background:#5a5a5a;"></div>
<div style="position:absolute;left:1033.6px;top:93.5px;width:7.2px;height:1.2px;background:#485a44;"></div>
<div style="position:absolute;left:1041.7px;top:93.5px;width:9.0px;height:1.2px;background:#485a44;"></div>
<div style="position:absolute;left:1051.6px;top:93.5px;width:5.4px;height:1.2px;background:#5a5a5a;"></div>
<div style="position:absolute;left:1027.3px;top:98.5px;width:1.8px;height:1.2px;background:#5a5a5a;"></div>
<div style="position:absolute;left:1030.0px;top:98.5px;width:1.8px;height:1.2px;background:#5a5a5a;"></div>
<div style="position:absolute;left:1032.7px;top:98.5px;width:8.1px;height:1.2px;background:#5a5a5a;"></div>
<div style="position:absolute;left:1027.3px;top:101.0px;width:1.8px;height:1.2px;background:#484848;"></div>
<div style="position:absolute;left:1030.0px;top:101.0px;width:1.8px;height:1.2px;background:#484848;"></div>
<div style="position:absolute;left:1032.7px;top:101.0px;width:9.9px;height:1.2px;background:#484848;"></div>
<div style="position:absolute;left:1043.5px;top:101.0px;width:7.2px;height:1.2px;background:#484848;"></div>
<div style="position:absolute;left:1027.3px;top:103.5px;width:5.4px;height:1.2px;background:#5a5a5a;"></div>
<div style="position:absolute;left:1033.6px;top:103.5px;width:7.2px;height:1.2px;background:#485a44;"></div>
<div style="position:absolute;left:1041.7px;top:103.5px;width:9.0px;height:1.2px;background:#485a44;"></div>
<div style="position:absolute;left:1051.6px;top:103.5px;width:5.4px;height:1.2px;background:#5a5a5a;"></div>
<div style="position:absolute;left:1027.3px;top:108.5px;width:1.8px;height:1.2px;background:#5a5a5a;"></div>
<div style="position:absolute;left:1030.0px;top:108.5px;width:1.8px;height:1.2px;background:#5a5a5a;"></div>
<div style="position:absolute;left:1032.7px;top:108.5px;width:8.1px;height:1.2px;background:#5a5a5a;"></div>
<div style="position:absolute;left:1027.3px;top:111.0px;width:1.8px;height:1.2px;background:#484848;"></div>
<div style="position:absolute;left:1030.0px;top:111.0px;width:1.8px;height:1.2px;background:#484848;"></div>
<div style="position:absolute;left:1032.7px;top:111.0px;width:9.9px;height:1.2px;background:#484848;"></div>
<div style="position:absolute;left:1043.5px;top:111.0px;width:7.2px;height:1.2px;background:#484848;"></div>
<div style="position:absolute;left:1027.3px;top:113.5px;width:5.4px;height:1.2px;background:#5a5a5a;"></div>
<div style="position:absolute;left:1033.6px;top:113.5px;width:7.2px;height:1.2px;background:#485a44;"></div>
<div style="position:absolute;left:1041.7px;top:113.5px;width:9.0px;height:1.2px;background:#485a44;"></div>
<div style="position:absolute;left:1051.6px;top:113.5px;width:5.4px;height:1.2px;background:#5a5a5a;"></div>
<div style="position:absolute;left:1027.3px;top:118.5px;width:1.8px;height:1.2px;background:#484848;"></div>
<div style="position:absolute;left:1030.0px;top:118.5px;width:3.6px;height:1.2px;background:#484848;"></div>
<div style="position:absolute;left:1034.5px;top:118.5px;width:9.0px;height:1.2px;background:#484848;"></div>
<div style="position:absolute;left:1027.3px;top:121.0px;width:5.4px;height:1.2px;background:#5a5a5a;"></div>
<div style="position:absolute;left:1033.6px;top:121.0px;width:3.6px;height:1.2px;background:#5a5a5a;"></div>
<div style="position:absolute;left:1038.1px;top:121.0px;width:2.7px;height:1.2px;background:#5a5a5a;"></div>
<div style="position:absolute;left:1041.7px;top:121.0px;width:7.2px;height:1.2px;background:#485a44;"></div>
<div style="position:absolute;left:1027.3px;top:123.5px;width:5.4px;height:1.2px;background:#5a5a5a;"></div>
<div style="position:absolute;left:1033.6px;top:123.5px;width:10.8px;height:1.2px;background:#485a44;"></div>
<div style="position:absolute;left:1045.3px;top:123.5px;width:10.8px;height:1.2px;background:#485a44;"></div>
<div style="position:absolute;left:1057.0px;top:123.5px;width:3.0px;height:1.2px;background:#5a5a5a;"></div>
<div style="position:absolute;left:1023.7px;top:128.5px;width:0.9px;height:1.2px;background:#6e6244;"></div>
<div style="position:absolute;left:1023.7px;top:133.5px;width:3.6px;height:1.2px;background:#6a4a30;"></div>
<div style="position:absolute;left:1028.2px;top:133.5px;width:14.4px;height:1.2px;background:#5a5a5a;"></div>
<div style="position:absolute;left:1043.5px;top:133.5px;width:5.4px;height:1.2px;background:#5a5a5a;"></div>
<div style="position:absolute;left:1027.3px;top:136.0px;width:2.7px;height:1.2px;background:#5a5a5a;"></div>
<div style="position:absolute;left:1030.9px;top:136.0px;width:1.8px;height:1.2px;background:#5a5a5a;"></div>
<div style="position:absolute;left:1033.6px;top:136.0px;width:21.6px;height:1.2px;background:#485a44;"></div>
<div style="position:absolute;left:1027.3px;top:141.0px;width:1.8px;height:1.2px;background:#5a5a5a;"></div>
<div style="position:absolute;left:1030.0px;top:141.0px;width:1.8px;height:1.2px;background:#5a5a5a;"></div>
<div style="position:absolute;left:1032.7px;top:141.0px;width:8.1px;height:1.2px;background:#5a5a5a;"></div>
<div style="position:absolute;left:1027.3px;top:143.5px;width:1.8px;height:1.2px;background:#484848;"></div>
<div style="position:absolute;left:1030.0px;top:143.5px;width:1.8px;height:1.2px;background:#484848;"></div>
<div style="position:absolute;left:1032.7px;top:143.5px;width:9.9px;height:1.2px;background:#484848;"></div>
<div style="position:absolute;left:1043.5px;top:143.5px;width:7.2px;height:1.2px;background:#484848;"></div>
<div style="position:absolute;left:1027.3px;top:146.0px;width:5.4px;height:1.2px;background:#5a5a5a;"></div>
<div style="position:absolute;left:1033.6px;top:146.0px;width:7.2px;height:1.2px;background:#485a44;"></div>
<div style="position:absolute;left:1041.7px;top:146.0px;width:9.0px;height:1.2px;background:#485a44;"></div>
<div style="position:absolute;left:1051.6px;top:146.0px;width:5.4px;height:1.2px;background:#5a5a5a;"></div>
<div style="position:absolute;left:1027.3px;top:151.0px;width:1.8px;height:1.2px;background:#5a5a5a;"></div>
<div style="position:absolute;left:1030.0px;top:151.0px;width:1.8px;height:1.2px;background:#5a5a5a;"></div>
<div style="position:absolute;left:1032.7px;top:151.0px;width:8.1px;height:1.2px;background:#5a5a5a;"></div>
<div style="position:absolute;left:1027.3px;top:153.5px;width:1.8px;height:1.2px;background:#484848;"></div>
<div style="position:absolute;left:1030.0px;top:153.5px;width:1.8px;height:1.2px;background:#484848;"></div>
<div style="position:absolute;left:1032.7px;top:153.5px;width:9.9px;height:1.2px;background:#484848;"></div>
<div style="position:absolute;left:1043.5px;top:153.5px;width:7.2px;height:1.2px;background:#484848;"></div>
<div style="position:absolute;left:1027.3px;top:156.0px;width:5.4px;height:1.2px;background:#5a5a5a;"></div>
<div style="position:absolute;left:1033.6px;top:156.0px;width:7.2px;height:1.2px;background:#485a44;"></div>
<div style="position:absolute;left:1041.7px;top:156.0px;width:9.0px;height:1.2px;background:#485a44;"></div>
<div style="position:absolute;left:1051.6px;top:156.0px;width:5.4px;height:1.2px;background:#5a5a5a;"></div>
<div style="position:absolute;left:1027.3px;top:161.0px;width:1.8px;height:1.2px;background:#5a5a5a;"></div>
<div style="position:absolute;left:1030.0px;top:161.0px;width:1.8px;height:1.2px;background:#5a5a5a;"></div>
<div style="position:absolute;left:1032.7px;top:161.0px;width:8.1px;height:1.2px;background:#5a5a5a;"></div>
<div style="position:absolute;left:1027.3px;top:163.5px;width:1.8px;height:1.2px;background:#484848;"></div>
<div style="position:absolute;left:1030.0px;top:163.5px;width:1.8px;height:1.2px;background:#484848;"></div>
<div style="position:absolute;left:1032.7px;top:163.5px;width:9.9px;height:1.2px;background:#484848;"></div>
<div style="position:absolute;left:1043.5px;top:163.5px;width:7.2px;height:1.2px;background:#484848;"></div>
<div style="position:absolute;left:1027.3px;top:166.0px;width:5.4px;height:1.2px;background:#5a5a5a;"></div>
<div style="position:absolute;left:1033.6px;top:166.0px;width:7.2px;height:1.2px;background:#485a44;"></div>
<div style="position:absolute;left:1041.7px;top:166.0px;width:9.0px;height:1.2px;background:#485a44;"></div>
<div style="position:absolute;left:1051.6px;top:166.0px;width:5.4px;height:1.2px;background:#5a5a5a;"></div>
<div style="position:absolute;left:1027.3px;top:171.0px;width:1.8px;height:1.2px;background:#5a5a5a;"></div>
<div style="position:absolute;left:1030.0px;top:171.0px;width:1.8px;height:1.2px;background:#5a5a5a;"></div>
<div style="position:absolute;left:1032.7px;top:171.0px;width:8.1px;height:1.2px;background:#5a5a5a;"></div>
<div style="position:absolute;left:1027.3px;top:173.5px;width:1.8px;height:1.2px;background:#484848;"></div>
<div style="position:absolute;left:1030.0px;top:173.5px;width:1.8px;height:1.2px;background:#484848;"></div>
<div style="position:absolute;left:1032.7px;top:173.5px;width:9.9px;height:1.2px;background:#484848;"></div>
<div style="position:absolute;left:1043.5px;top:173.5px;width:7.2px;height:1.2px;background:#484848;"></div>
<div style="position:absolute;left:1027.3px;top:176.0px;width:5.4px;height:1.2px;background:#5a5a5a;"></div>
<div style="position:absolute;left:1033.6px;top:176.0px;width:7.2px;height:1.2px;background:#485a44;"></div>
<div style="position:absolute;left:1041.7px;top:176.0px;width:9.0px;height:1.2px;background:#485a44;"></div>
<div style="position:absolute;left:1051.6px;top:176.0px;width:5.4px;height:1.2px;background:#5a5a5a;"></div>
<div style="position:absolute;left:1027.3px;top:181.0px;width:1.8px;height:1.2px;background:#484848;"></div>
<div style="position:absolute;left:1030.0px;top:181.0px;width:16.2px;height:1.2px;background:#484848;"></div>
<div style="position:absolute;left:1047.1px;top:181.0px;width:9.0px;height:1.2px;background:#484848;"></div>
<div style="position:absolute;left:1027.3px;top:183.5px;width:5.4px;height:1.2px;background:#5a5a5a;"></div>
<div style="position:absolute;left:1033.6px;top:183.5px;width:21.6px;height:1.2px;background:#485a44;"></div>
<div style="position:absolute;left:1056.1px;top:183.5px;width:3.9px;height:1.2px;background:#485a44;"></div>
<div style="position:absolute;left:1023.7px;top:188.5px;width:3.6px;height:1.2px;background:#6a4a30;"></div>
<div style="position:absolute;left:1028.2px;top:188.5px;width:14.4px;height:1.2px;background:#5a5a5a;"></div>
<div style="position:absolute;left:1043.5px;top:188.5px;width:5.4px;height:1.2px;background:#5a5a5a;"></div>
<div style="position:absolute;left:1027.3px;top:191.0px;width:2.7px;height:1.2px;background:#5a5a5a;"></div>
<div style="position:absolute;left:1030.9px;top:191.0px;width:1.8px;height:1.2px;background:#5a5a5a;"></div>
<div style="position:absolute;left:1033.6px;top:191.0px;width:21.6px;height:1.2px;background:#485a44;"></div>
<div style="position:absolute;left:1027.3px;top:196.0px;width:1.8px;height:1.2px;background:#5a5a5a;"></div>
<div style="position:absolute;left:1030.0px;top:196.0px;width:1.8px;height:1.2px;background:#5a5a5a;"></div>
<div style="position:absolute;left:1032.7px;top:196.0px;width:8.1px;height:1.2px;background:#5a5a5a;"></div>
<div style="position:absolute;left:1027.3px;top:198.5px;width:1.8px;height:1.2px;background:#484848;"></div>
<div style="position:absolute;left:1030.0px;top:198.5px;width:1.8px;height:1.2px;background:#484848;"></div>
<div style="position:absolute;left:1032.7px;top:198.5px;width:9.9px;height:1.2px;background:#484848;"></div>
<div style="position:absolute;left:1043.5px;top:198.5px;width:7.2px;height:1.2px;background:#484848;"></div>
<div style="position:absolute;left:1027.3px;top:201.0px;width:5.4px;height:1.2px;background:#5a5a5a;"></div>
<div style="position:absolute;left:1033.6px;top:201.0px;width:7.2px;height:1.2px;background:#485a44;"></div>
<div style="position:absolute;left:1041.7px;top:201.0px;width:9.0px;height:1.2px;background:#485a44;"></div>
<div style="position:absolute;left:1051.6px;top:201.0px;width:5.4px;height:1.2px;background:#5a5a5a;"></div>
<div style="position:absolute;left:1027.3px;top:206.0px;width:1.8px;height:1.2px;background:#5a5a5a;"></div>
<div style="position:absolute;left:1030.0px;top:206.0px;width:1.8px;height:1.2px;background:#5a5a5a;"></div>
<div style="position:absolute;left:1032.7px;top:206.0px;width:8.1px;height:1.2px;background:#5a5a5a;"></div>
<div style="position:absolute;left:1027.3px;top:208.5px;width:1.8px;height:1.2px;background:#484848;"></div>
<div style="position:absolute;left:1030.0px;top:208.5px;width:1.8px;height:1.2px;background:#484848;"></div>
<div style="position:absolute;left:1032.7px;top:208.5px;width:9.9px;height:1.2px;background:#484848;"></div>
<div style="position:absolute;left:1043.5px;top:208.5px;width:7.2px;height:1.2px;background:#484848;"></div>
<div style="position:absolute;left:1027.3px;top:211.0px;width:5.4px;height:1.2px;background:#5a5a5a;"></div>
<div style="position:absolute;left:1033.6px;top:211.0px;width:7.2px;height:1.2px;background:#485a44;"></div>
<div style="position:absolute;left:1041.7px;top:211.0px;width:9.0px;height:1.2px;background:#485a44;"></div>
<div style="position:absolute;left:1051.6px;top:211.0px;width:5.4px;height:1.2px;background:#5a5a5a;"></div>
<div style="position:absolute;left:1027.3px;top:216.0px;width:1.8px;height:1.2px;background:#5a5a5a;"></div>
<div style="position:absolute;left:1030.0px;top:216.0px;width:1.8px;height:1.2px;background:#5a5a5a;"></div>
<div style="position:absolute;left:1032.7px;top:216.0px;width:8.1px;height:1.2px;background:#5a5a5a;"></div>
<div style="position:absolute;left:1027.3px;top:218.5px;width:1.8px;height:1.2px;background:#484848;"></div>
<div style="position:absolute;left:1030.0px;top:218.5px;width:1.8px;height:1.2px;background:#484848;"></div>
<div style="position:absolute;left:1032.7px;top:218.5px;width:9.9px;height:1.2px;background:#484848;"></div>
<div style="position:absolute;left:1043.5px;top:218.5px;width:7.2px;height:1.2px;background:#484848;"></div>
<div style="position:absolute;left:1027.3px;top:221.0px;width:5.4px;height:1.2px;background:#5a5a5a;"></div>
<div style="position:absolute;left:1033.6px;top:221.0px;width:7.2px;height:1.2px;background:#485a44;"></div>
<div style="position:absolute;left:1041.7px;top:221.0px;width:9.0px;height:1.2px;background:#485a44;"></div>
<div style="position:absolute;left:1051.6px;top:221.0px;width:5.4px;height:1.2px;background:#5a5a5a;"></div>
<div style="position:absolute;left:1027.3px;top:226.0px;width:1.8px;height:1.2px;background:#5a5a5a;"></div>
<div style="position:absolute;left:1030.0px;top:226.0px;width:1.8px;height:1.2px;background:#5a5a5a;"></div>
<div style="position:absolute;left:1032.7px;top:226.0px;width:8.1px;height:1.2px;background:#5a5a5a;"></div>
<div style="position:absolute;left:1027.3px;top:228.5px;width:1.8px;height:1.2px;background:#484848;"></div>
<div style="position:absolute;left:1030.0px;top:228.5px;width:1.8px;height:1.2px;background:#484848;"></div>
<div style="position:absolute;left:1032.7px;top:228.5px;width:9.9px;height:1.2px;background:#484848;"></div>
<div style="position:absolute;left:1043.5px;top:228.5px;width:7.2px;height:1.2px;background:#484848;"></div>
<div style="position:absolute;left:1027.3px;top:231.0px;width:5.4px;height:1.2px;background:#5a5a5a;"></div>
<div style="position:absolute;left:1033.6px;top:231.0px;width:7.2px;height:1.2px;background:#485a44;"></div>
<div style="position:absolute;left:1041.7px;top:231.0px;width:9.0px;height:1.2px;background:#485a44;"></div>
<div style="position:absolute;left:1051.6px;top:231.0px;width:5.4px;height:1.2px;background:#5a5a5a;"></div>
<div style="position:absolute;left:1027.3px;top:236.0px;width:1.8px;height:1.2px;background:#5a5a5a;"></div>
<div style="position:absolute;left:1030.0px;top:236.0px;width:1.8px;height:1.2px;background:#5a5a5a;"></div>
<div style="position:absolute;left:1032.7px;top:236.0px;width:8.1px;height:1.2px;background:#5a5a5a;"></div>
<div style="position:absolute;left:1027.3px;top:238.5px;width:1.8px;height:1.2px;background:#484848;"></div>
<div style="position:absolute;left:1030.0px;top:238.5px;width:1.8px;height:1.2px;background:#484848;"></div>
<div style="position:absolute;left:1032.7px;top:238.5px;width:9.9px;height:1.2px;background:#484848;"></div>
<div style="position:absolute;left:1043.5px;top:238.5px;width:7.2px;height:1.2px;background:#484848;"></div>
<div style="position:absolute;left:1027.3px;top:241.0px;width:5.4px;height:1.2px;background:#5a5a5a;"></div>
<div style="position:absolute;left:1033.6px;top:241.0px;width:7.2px;height:1.2px;background:#485a44;"></div>
<div style="position:absolute;left:1041.7px;top:241.0px;width:9.0px;height:1.2px;background:#485a44;"></div>
<div style="position:absolute;left:1051.6px;top:241.0px;width:5.4px;height:1.2px;background:#5a5a5a;"></div>
<div style="position:absolute;left:1027.3px;top:246.0px;width:1.8px;height:1.2px;background:#484848;"></div>
<div style="position:absolute;left:1030.0px;top:246.0px;width:16.2px;height:1.2px;background:#484848;"></div>
<div style="position:absolute;left:1047.1px;top:246.0px;width:9.0px;height:1.2px;background:#484848;"></div>
<div style="position:absolute;left:1027.3px;top:248.5px;width:5.4px;height:1.2px;background:#5a5a5a;"></div>
<div style="position:absolute;left:1033.6px;top:248.5px;width:10.8px;height:1.2px;background:#5a5a5a;"></div>
<div style="position:absolute;left:1027.3px;top:251.0px;width:3.6px;height:1.2px;background:#5a5a5a;"></div>
<div style="position:absolute;left:1023.7px;top:253.5px;width:0.9px;height:1.2px;background:#6e6244;"></div>
<div style="position:absolute;left:1023.7px;top:258.5px;width:0.9px;height:1.2px;background:#6a4a30;"></div>
<div style="position:absolute;left:1025.5px;top:258.5px;width:2.7px;height:1.2px;background:#6a4a30;"></div>
<div style="position:absolute;left:1029.1px;top:258.5px;width:12.6px;height:1.2px;background:#5a5a5a;"></div>
<div style="position:absolute;left:1042.6px;top:258.5px;width:5.4px;height:1.2px;background:#5a5a5a;"></div>
<div style="position:absolute;left:1023.7px;top:263.0px;width:0.9px;height:1.2px;background:#6a4a30;"></div>
<div style="position:absolute;left:1025.5px;top:263.0px;width:2.7px;height:1.2px;background:#6a4a30;"></div>
<div style="position:absolute;left:1029.1px;top:263.0px;width:17.1px;height:1.2px;background:#5a5a5a;"></div>
<div style="position:absolute;left:1047.1px;top:263.0px;width:5.4px;height:1.2px;background:#5a5a5a;"></div>
<div style="position:absolute;left:1023.7px;top:267.5px;width:0.9px;height:1.2px;background:#6a4a30;"></div>
<div style="position:absolute;left:1025.5px;top:267.5px;width:2.7px;height:1.2px;background:#6a4a30;"></div>
<div style="position:absolute;left:1029.1px;top:267.5px;width:15.3px;height:1.2px;background:#5a5a5a;"></div>
<div style="position:absolute;left:1045.3px;top:267.5px;width:5.4px;height:1.2px;background:#5a5a5a;"></div>
<div style="position:absolute;left:1023.7px;top:272.0px;width:0.9px;height:1.2px;background:#6a4a30;"></div>
<div style="position:absolute;left:1025.5px;top:272.0px;width:2.7px;height:1.2px;background:#6a4a30;"></div>
<div style="position:absolute;left:1029.1px;top:272.0px;width:13.5px;height:1.2px;background:#5a5a5a;"></div>
<div style="position:absolute;left:1043.5px;top:272.0px;width:5.4px;height:1.2px;background:#5a5a5a;"></div>
<div style="position:absolute;left:1023.7px;top:276.5px;width:0.9px;height:1.2px;background:#6a4a30;"></div>
<div style="position:absolute;left:1025.5px;top:276.5px;width:2.7px;height:1.2px;background:#6a4a30;"></div>
<div style="position:absolute;left:1029.1px;top:276.5px;width:18.0px;height:1.2px;background:#5a5a5a;"></div>
<div style="position:absolute;left:1048.0px;top:276.5px;width:5.4px;height:1.2px;background:#5a5a5a;"></div>
<div style="position:absolute;left:1023.7px;top:281.0px;width:0.9px;height:1.2px;background:#6a4a30;"></div>
<div style="position:absolute;left:1025.5px;top:281.0px;width:2.7px;height:1.2px;background:#6a4a30;"></div>
<div style="position:absolute;left:1029.1px;top:281.0px;width:16.2px;height:1.2px;background:#5a5a5a;"></div>
<div style="position:absolute;left:1046.2px;top:281.0px;width:5.4px;height:1.2px;background:#5a5a5a;"></div>
<div style="position:absolute;left:1023.7px;top:285.5px;width:0.9px;height:1.2px;background:#6a4a30;"></div>
<div style="position:absolute;left:1025.5px;top:285.5px;width:2.7px;height:1.2px;background:#6a4a30;"></div>
<div style="position:absolute;left:1029.1px;top:285.5px;width:14.4px;height:1.2px;background:#5a5a5a;"></div>
<div style="position:absolute;left:1044.4px;top:285.5px;width:5.4px;height:1.2px;background:#5a5a5a;"></div>
<div style="position:absolute;left:1023.7px;top:290.0px;width:0.9px;height:1.2px;background:#6a4a30;"></div>
<div style="position:absolute;left:1025.5px;top:290.0px;width:2.7px;height:1.2px;background:#6a4a30;"></div>
<div style="position:absolute;left:1029.1px;top:290.0px;width:12.6px;height:1.2px;background:#5a5a5a;"></div>
<div style="position:absolute;left:1042.6px;top:290.0px;width:5.4px;height:1.2px;background:#5a5a5a;"></div>
<div style="position:absolute;left:1023.7px;top:294.5px;width:0.9px;height:1.2px;background:#6a4a30;"></div>
<div style="position:absolute;left:1025.5px;top:294.5px;width:2.7px;height:1.2px;background:#6a4a30;"></div>
<div style="position:absolute;left:1029.1px;top:294.5px;width:17.1px;height:1.2px;background:#5a5a5a;"></div>
<div style="position:absolute;left:1047.1px;top:294.5px;width:5.4px;height:1.2px;background:#5a5a5a;"></div>
<div style="position:absolute;left:1023.7px;top:299.0px;width:0.9px;height:1.2px;background:#6a4a30;"></div>
<div style="position:absolute;left:1025.5px;top:299.0px;width:2.7px;height:1.2px;background:#6a4a30;"></div>
<div style="position:absolute;left:1029.1px;top:299.0px;width:15.3px;height:1.2px;background:#5a5a5a;"></div>
<div style="position:absolute;left:1045.3px;top:299.0px;width:5.4px;height:1.2px;background:#5a5a5a;"></div>
<div style="position:absolute;left:1023.7px;top:303.5px;width:0.9px;height:1.2px;background:#6a4a30;"></div>
<div style="position:absolute;left:1025.5px;top:303.5px;width:2.7px;height:1.2px;background:#6a4a30;"></div>
<div style="position:absolute;left:1029.1px;top:303.5px;width:13.5px;height:1.2px;background:#5a5a5a;"></div>
<div style="position:absolute;left:1043.5px;top:303.5px;width:5.4px;height:1.2px;background:#5a5a5a;"></div>
<div style="position:absolute;left:1023.7px;top:308.0px;width:2.7px;height:1.2px;background:#6a4a30;"></div>
<div style="position:absolute;left:1027.3px;top:308.0px;width:9.0px;height:1.2px;background:#5a5a5a;"></div>
<div style="position:absolute;left:1037.2px;top:308.0px;width:5.4px;height:1.2px;background:#5a5a5a;"></div>
<div style="position:absolute;left:1025.5px;top:310.5px;width:1.8px;height:1.2px;background:#5a5a5a;"></div>
<div style="position:absolute;left:1028.2px;top:310.5px;width:9.0px;height:1.2px;background:#485a44;"></div>
<div style="position:absolute;left:1027.3px;top:313.0px;width:9.0px;height:1.2px;background:#485a44;"></div>
<div style="position:absolute;left:1037.2px;top:313.0px;width:12.6px;height:1.2px;background:#485a44;"></div>
<div style="position:absolute;left:1025.5px;top:318.0px;width:1.8px;height:1.2px;background:#5a5a5a;"></div>
<div style="position:absolute;left:1025.5px;top:320.5px;width:7.2px;height:1.2px;background:#484848;"></div>
<div style="position:absolute;left:1033.6px;top:320.5px;width:10.8px;height:1.2px;background:#484848;"></div>
<div style="position:absolute;left:1045.3px;top:320.5px;width:9.0px;height:1.2px;background:#484848;"></div>
<div style="position:absolute;left:1023.7px;top:323.0px;width:5.4px;height:1.2px;background:#5a5a5a;"></div>
<div style="position:absolute;left:1023.7px;top:328.0px;width:0.9px;height:1.2px;background:#6e6244;"></div>
<div style="position:absolute;left:1023.7px;top:333.0px;width:2.7px;height:1.2px;background:#6a4a30;"></div>
<div style="position:absolute;left:1027.3px;top:333.0px;width:12.6px;height:1.2px;background:#5a5a5a;"></div>
<div style="position:absolute;left:1040.8px;top:333.0px;width:2.7px;height:1.2px;background:#5a5a5a;"></div>
<div style="position:absolute;left:1025.5px;top:335.5px;width:1.8px;height:1.2px;background:#5a5a5a;"></div>
<div style="position:absolute;left:1028.2px;top:335.5px;width:2.7px;height:1.2px;background:#5a5a5a;"></div>
<div style="position:absolute;left:1025.5px;top:338.0px;width:2.7px;height:1.2px;background:#5a5a5a;"></div>
<div style="position:absolute;left:1029.1px;top:338.0px;width:10.8px;height:1.2px;background:#5a5a5a;"></div>
<div style="position:absolute;left:1025.5px;top:343.0px;width:2.7px;height:1.2px;background:#5a5a5a;"></div>
<div style="position:absolute;left:1029.1px;top:343.0px;width:3.6px;height:1.2px;background:#5a5a5a;"></div>
<div style="position:absolute;left:1025.5px;top:345.5px;width:5.4px;height:1.2px;background:#5a5a5a;"></div>
<div style="position:absolute;left:1031.8px;top:345.5px;width:2.7px;height:1.2px;background:#5a5a5a;"></div>
<div style="position:absolute;left:1035.4px;top:345.5px;width:1.8px;height:1.2px;background:#5a5a5a;"></div>
<div style="position:absolute;left:1025.5px;top:350.5px;width:1.8px;height:1.2px;background:#5a5a5a;"></div>
<div style="position:absolute;left:1028.2px;top:350.5px;width:1.8px;height:1.2px;background:#5a5a5a;"></div>
<div style="position:absolute;left:1025.5px;top:353.0px;width:2.7px;height:1.2px;background:#5a5a5a;"></div>
<div style="position:absolute;left:1029.1px;top:353.0px;width:9.0px;height:1.2px;background:#5a5a5a;"></div>
<div style="position:absolute;left:1025.5px;top:358.0px;width:3.6px;height:1.2px;background:#5a5a5a;"></div>
<div style="position:absolute;left:1030.0px;top:358.0px;width:2.7px;height:1.2px;background:#5a5a5a;"></div>
<div style="position:absolute;left:1025.5px;top:360.5px;width:5.4px;height:1.2px;background:#5a5a5a;"></div>
<div style="position:absolute;left:1031.8px;top:360.5px;width:2.7px;height:1.2px;background:#5a5a5a;"></div>
<div style="position:absolute;left:1035.4px;top:360.5px;width:1.8px;height:1.2px;background:#5a5a5a;"></div>
<div style="position:absolute;left:1023.7px;top:363.0px;width:0.9px;height:1.2px;background:#6e6244;"></div>
<div style="position:absolute;left:1023.7px;top:368.0px;width:2.7px;height:1.2px;background:#6a4a30;"></div>
<div style="position:absolute;left:1027.3px;top:368.0px;width:12.6px;height:1.2px;background:#5a5a5a;"></div>
<div style="position:absolute;left:1040.8px;top:368.0px;width:2.7px;height:1.2px;background:#5a5a5a;"></div>
<div style="position:absolute;left:1025.5px;top:370.5px;width:2.7px;height:1.2px;background:#5a5a5a;"></div>
<div style="position:absolute;left:1029.1px;top:370.5px;width:9.0px;height:1.2px;background:#485a44;"></div>
<div style="position:absolute;left:1027.3px;top:373.0px;width:10.8px;height:1.2px;background:#485a44;"></div>
<div style="position:absolute;left:1039.0px;top:373.0px;width:10.8px;height:1.2px;background:#485a44;"></div>
<div style="position:absolute;left:1009px;top:84px;width:9px;height:8.7px;background:#d4a820;"></div>
<div style="position:absolute;left:1004px;top:134px;width:1.8px;height:11px;background:#56704e;"></div>
<div style="position:absolute;left:1004px;top:147px;width:1.8px;height:6px;background:#56704e;"></div>
<div style="position:absolute;left:1004px;top:176.8px;width:1.8px;height:14.199999999999989px;background:#4f6478;"></div>
<div style="position:absolute;left:1004px;top:201.7px;width:1.8px;height:13.0px;background:#4f6478;"></div>
<div style="position:absolute;left:1011.4px;top:173.2px;width:5.6px;height:26.1px;background:#4a4a4a;border-radius:3px;"></div>
<div style="position:absolute;left:1011.4px;top:173.2px;width:5.6px;height:26.1px;background:#505050;border-radius:3px;"></div>
<div style="position:absolute;left:1007px;top:175.6px;width:15.5px;height:13px;background:#2f5a2f;opacity:0.85;"></div>
<div style="position:absolute;left:1007px;top:175.6px;width:15.5px;height:1.0px;background:#3f7f3f;"></div>
<div style="position:absolute;left:1007px;top:177.79999999999998px;width:15.5px;height:1.0px;background:#3f7f3f;"></div>
<div style="position:absolute;left:1007px;top:180.0px;width:15.5px;height:1.0px;background:#3f7f3f;"></div>
<div style="position:absolute;left:1007px;top:182.2px;width:15.5px;height:1.0px;background:#3f7f3f;"></div>
<div style="position:absolute;left:1007px;top:184.4px;width:15.5px;height:1.0px;background:#3f7f3f;"></div>
<div style="position:absolute;left:1007px;top:186.6px;width:15.5px;height:1.0px;background:#3f7f3f;"></div>
<div style="position:absolute;left:1007px;top:201.7px;width:15px;height:1.6px;background:#c9a227;"></div>
<div style="position:absolute;left:1007px;top:224.2px;width:13px;height:1.6px;background:#c9a227;"></div>
<div style="position:absolute;left:1007px;top:228.9px;width:13px;height:1.6px;background:#c9a227;"></div>
</div>
<div style="position:absolute;left:290px;top:394.5px;width:771px;height:18.5px;background:#2f3031;"></div>
<div id="t49" style="position:absolute;left:351.7px;top:395px;font-family:'Liberation Sans', sans-serif;font-size:11px;line-height:18px;color:#bbbbbb;font-weight:normal;white-space:pre;letter-spacing:-0.105px;">TestSliceOutOfBound(t *testing.T)</div>
<div style="position:absolute;left:1061px;top:61.5px;width:19px;height:578.5px;background:#3c3f41;"></div>
<div style="position:absolute;left:1061px;top:61.5px;width:1px;height:578.5px;background:#323232;"></div>
<div style="position:absolute;left:1078.5px;top:37px;width:1.5px;height:638px;background:#2b2b2b;"></div>
<svg style="position:absolute;left:1065px;top:71px;" width="11" height="11" viewBox="0 0 11 11"><ellipse cx="5.5" cy="6.5" rx="2.5" ry="3.5" fill="#c8c8c8"/><circle cx="5.5" cy="2" r="1.6" fill="#c8c8c8"/><path d="M0 3l3 2M11 3L8 5M0 7h3M11 7H8M0 11l3-2M11 11L8 9" stroke="#c8c8c8" stroke-width="1"/></svg>
<div id="v50" style="position:absolute;left:1076px;top:85.4px;height:14px;transform-origin:0 0;transform:rotate(90deg);font-family:'Liberation Sans',sans-serif;font-size:10px;line-height:14px;color:#b8b8b8;white-space:pre;letter-spacing:-0.381px;">Ant Build</div>
<div style="position:absolute;left:1064px;top:138px;font-family:'Liberation Sans',sans-serif;font-size:14px;font-style:italic;font-weight:bold;color:#c8c8c8;line-height:14px;">m</div>
<div id="v51" style="position:absolute;left:1076px;top:157px;height:14px;transform-origin:0 0;transform:rotate(90deg);font-family:'Liberation Sans',sans-serif;font-size:10px;line-height:14px;color:#b8b8b8;white-space:pre;letter-spacing:-0.603px;">Maven</div>
<svg style="position:absolute;left:1064px;top:204.5px;" width="12" height="12" viewBox="0 0 12 12"><circle cx="6" cy="6" r="5.5" fill="#c8c8c8"/><path d="M3 3l6 6M9 3L3 9" stroke="#3c3f41" stroke-width="1.5"/><circle cx="6" cy="6" r="2" fill="#3c3f41"/></svg>
<div id="v52" style="position:absolute;left:1076px;top:220.5px;height:14px;transform-origin:0 0;transform:rotate(90deg);font-family:'Liberation Sans',sans-serif;font-size:10px;line-height:14px;color:#b8b8b8;white-space:pre;letter-spacing:-0.328px;">Key Promoter X</div>
<div id="v53" style="position:absolute;left:1076px;top:297.7px;height:14px;transform-origin:0 0;transform:rotate(90deg);font-family:'Liberation Sans',sans-serif;font-size:10px;line-height:14px;color:#b8b8b8;white-space:pre;letter-spacing:-0.030px;">1024 Tools</div>
<svg style="position:absolute;left:1064px;top:362.5px;" width="12" height="13" viewBox="0 0 12 13"><rect x="0.5" y="0.5" width="11" height="12" rx="2.5" fill="#c8c8c8"/><path d="M3 1v11M6 1v11M9 1v11" stroke="#3c3f41" stroke-width="1"/></svg>
<div id="v54" style="position:absolute;left:1076px;top:383.7px;height:14px;transform-origin:0 0;transform:rotate(90deg);font-family:'Liberation Sans',sans-serif;font-size:10px;line-height:14px;color:#b8b8b8;white-space:pre;letter-spacing:0.061px;">Database</div>
<div style="position:absolute;left:17px;top:413px;width:1044px;height:227px;background:#3c3f41;"></div>
<div style="position:absolute;left:17px;top:413px;width:1044px;height:0.8px;background:#2b2b2b;"></div>
<div id="t55" style="position:absolute;left:23px;top:416.5px;font-family:'Liberation Sans', sans-serif;font-size:11px;line-height:18px;color:#bbbbbb;font-weight:normal;white-space:pre;letter-spacing:-0.388px;">Run:</div>
<div style="position:absolute;left:50.5px;top:413.8px;width:265.5px;height:19.5px;background:#393b3d;"></div>
<svg style="position:absolute;left:63px;top:418px;" width="10" height="13" viewBox="0 0 10 13"><path d="M1 2Q1 0 5 0T9 2V11Q9 13 5 13T1 11z" fill="#6e8ea6"/><path d="M2.5 4h5M2.5 7h5" stroke="#4a6376" stroke-width="1"/><path d="M9 8l1.5 1-1.5 1z" fill="#499c54"/></svg>
<div id="t56" style="position:absolute;left:77.8px;top:416.5px;font-family:'Liberation Sans', sans-serif;font-size:11px;line-height:18px;color:#bbbbbb;font-weight:normal;white-space:pre;letter-spacing:-0.089px;">TestSliceOutOfBound in github.com/snowdr...</div>
<svg style="position:absolute;left:302px;top:422px;" width="7" height="7" viewBox="0 0 7 7"><path d="M0.5 0.5l6 6M6.5 0.5l-6 6" stroke="#6b6d6e" stroke-width="1"/></svg>
<svg style="position:absolute;left:1022px;top:418.5px;" width="11" height="11" viewBox="0 0 11 11"><path d="M5.5 0.3l1.2 1.6 2-.6.3 2 2 .8-1 1.7 1 1.7-2 .8-.3 2-2-.6-1.2 1.6-1.2-1.6-2 .6-.3-2-2-.8 1-1.7-1-1.7 2-.8.3-2 2 .6z" fill="#afb1b3"/><circle cx="5.5" cy="5.8" r="1.8" fill="#3c3f41"/></svg>
<div style="position:absolute;left:1044px;top:423.5px;width:11px;height:1.5px;background:#afb1b3;"></div>
<div style="position:absolute;left:17px;top:433.5px;width:1044px;height:0.8px;background:#323232;"></div>
<div style="position:absolute;left:40px;top:434px;width:0.8px;height:206px;background:#323232;"></div>
<svg style="position:absolute;left:25px;top:444px;" width="10" height="9" viewBox="0 0 10 9"><path d="M0.5 0v9l9-4.5z" fill="#499c54"/></svg>
<svg style="position:absolute;left:24px;top:462px;" width="13" height="14" viewBox="0 0 13 14"><path d="M0 5v9l7-4.5z" fill="#499c54"/><circle cx="8.5" cy="6" r="5" fill="#c75450"/><text x="6.3" y="9.5" font-family="Liberation Sans" font-size="8" font-weight="bold" fill="#fff">9</text></svg>
<svg style="position:absolute;left:24px;top:485px;" width="12" height="13" viewBox="0 0 12 13"><path d="M2 6Q2 2 6 2h2M10 7Q10 11 6 11H4" stroke="#afb1b3" stroke-width="1.4" fill="none"/><path d="M7 0l3 2-3 2zM5 9l-3 2 3 2z" fill="#afb1b3"/><rect x="4.5" y="5" width="3" height="3" fill="#afb1b3"/></svg>
<div style="position:absolute;left:22px;top:505.5px;width:18px;height:0.8px;background:#4a4d4f;"></div>
<div style="position:absolute;left:25.5px;top:515.5px;width:9px;height:9px;background:#5a5d5f;"></div>
<div style="position:absolute;left:22px;top:533px;width:18px;height:0.8px;background:#4a4d4f;"></div>
<svg style="position:absolute;left:24px;top:542px;" width="12" height="10" viewBox="0 0 12 10"><rect x="0" y="0" width="5.5" height="4.5" fill="#afb1b3"/><rect x="6.5" y="0" width="5.5" height="4.5" fill="#afb1b3"/><rect x="0" y="5.5" width="12" height="4.5" fill="#afb1b3"/></svg>
<div style="position:absolute;left:22px;top:561px;width:18px;height:0.8px;background:#4a4d4f;"></div>
<svg style="position:absolute;left:24px;top:570px;" width="11" height="11" viewBox="0 0 11 11"><path d="M6 0l5 5-2 .5-3 3 .5 2-6-6 2 .5 3-3z" fill="#afb1b3"/><path d="M0 11l3.5-3.5" stroke="#afb1b3" stroke-width="1.2"/></svg>
<svg style="position:absolute;left:48px;top:440px;" width="13" height="10" viewBox="0 0 13 10"><path d="M1 5l3.5 3.5L12 1" stroke="#afb1b3" stroke-width="1.8" fill="none"/></svg>
<div style="position:absolute;left:67.5px;top:436px;width:17.5px;height:20px;background:#4c5052;border-radius:2px;"></div>
<svg style="position:absolute;left:70px;top:440px;" width="12" height="12" viewBox="0 0 12 12"><circle cx="6" cy="6" r="5" stroke="#afb1b3" stroke-width="1.5" fill="none"/><path d="M2.5 9.5l7-7" stroke="#afb1b3" stroke-width="1.5"/></svg>
<div style="position:absolute;left:90.5px;top:438px;width:0.8px;height:16px;background:#4e5254;"></div>
<svg style="position:absolute;left:97px;top:439px;" width="13" height="14" viewBox="0 0 13 14"><path d="M4 0v11" stroke="#afb1b3" stroke-width="1.4"/><path d="M0.5 8l3.5 4 3.5-4z" fill="#afb1b3"/><text x="8" y="5" font-family="Liberation Sans" font-size="5.5" fill="#afb1b3">a</text><text x="8" y="11.5" font-family="Liberation Sans" font-size="5.5" fill="#afb1b3">z</text></svg>
<svg style="position:absolute;left:119px;top:439px;" width="14" height="14" viewBox="0 0 14 14"><path d="M4 0v11" stroke="#afb1b3" stroke-width="1.4"/><path d="M0.5 8l3.5 4 3.5-4z" fill="#afb1b3"/><path d="M8 1.5h5M8 4.5h4M8 7.5h3" stroke="#afb1b3" stroke-width="1.2"/></svg>
<div style="position:absolute;left:139.5px;top:438px;width:0.8px;height:16px;background:#4e5254;"></div>
<svg style="position:absolute;left:148px;top:439px;" width="12" height="13" viewBox="0 0 12 13"><path d="M0 0.7h12M0 12.3h12M0 6.5h12" stroke="#afb1b3" stroke-width="1.2"/><path d="M3 5h6L6 2zM3 8h6L6 11z" fill="#afb1b3"/></svg>
<svg style="position:absolute;left:169.5px;top:439px;" width="12" height="13" viewBox="0 0 12 13"><path d="M0 6.5h12" stroke="#afb1b3" stroke-width="1.2"/><path d="M3 1h6L6 4.5zM3 12h6L6 8.5z" fill="#afb1b3"/><path d="M0 0.7h12M0 12.3h12" stroke="#afb1b3" stroke-width="0"/></svg>
<div style="position:absolute;left:189.5px;top:438px;width:0.8px;height:16px;background:#4e5254;"></div>
<svg style="position:absolute;left:199.5px;top:439px;" width="8" height="12" viewBox="0 0 8 12"><path d="M4 12V1.5M0.5 5L4 1.5 7.5 5" stroke="#5c5f61" stroke-width="1.4" fill="none"/></svg>
<div style="position:absolute;left:233px;top:438px;font-family:'Liberation Sans', sans-serif;font-size:11px;line-height:14px;color:#afb1b3;font-weight:normal;white-space:pre;">»</div>
<svg style="position:absolute;left:248.5px;top:439px;" width="12" height="12" viewBox="0 0 12 12"><circle cx="6" cy="6" r="6" fill="#e6a33b"/><path d="M3.5 3.5l5 5M8.5 3.5l-5 5" stroke="#3c3f41" stroke-width="1.5"/></svg>
<div id="t57" style="position:absolute;left:263.5px;top:437px;font-family:'Liberation Sans', sans-serif;font-size:11px;line-height:18px;color:#999999;font-weight:normal;white-space:pre;letter-spacing:0.235px;"><span style="color:#d9615f">Tests failed: 1</span> of 1 test – 10 ms</div>
<div style="position:absolute;left:41px;top:459.5px;width:203.5px;height:14.5px;background:#0d293e;"></div>
<svg style="position:absolute;left:46.5px;top:463px;" width="8" height="7" viewBox="0 0 8 7"><path d="M0 0h8L4 6.5z" fill="#b2b2b2"/></svg>
<svg style="position:absolute;left:61.5px;top:460.5px;" width="12" height="12" viewBox="0 0 12 12"><circle cx="6" cy="6" r="5.6" fill="#e6a33b"/><path d="M3.7 3.7l4.6 4.6M8.3 3.7l-4.6 4.6" stroke="#3b2a10" stroke-width="1.3"/></svg>
<div id="t58" style="position:absolute;left:76.7px;top:458px;font-family:'Liberation Sans', sans-serif;font-size:11.5px;line-height:17px;color:#bbbbbb;font-weight:normal;white-space:pre;letter-spacing:0.055px;">Test Results</div>
<div id="t59" style="position:absolute;left:217.8px;top:458px;font-family:'Liberation Sans', sans-serif;font-size:10px;line-height:17px;color:#bbbbbb;font-weight:normal;white-space:pre;letter-spacing:-0.607px;">10 ms</div>
<svg style="position:absolute;left:76.5px;top:476.5px;" width="12" height="12" viewBox="0 0 12 12"><circle cx="6" cy="6" r="5.6" fill="#e6a33b"/><path d="M3.7 3.7l4.6 4.6M8.3 3.7l-4.6 4.6" stroke="#3b2a10" stroke-width="1.3"/></svg>
<div id="t60" style="position:absolute;left:92.2px;top:474px;font-family:'Liberation Sans', sans-serif;font-size:11.5px;line-height:17px;color:#bbbbbb;font-weight:normal;white-space:pre;letter-spacing:0.118px;">TestSliceOutOfBound</div>
<div id="t61" style="position:absolute;left:217.8px;top:474px;font-family:'Liberation Sans', sans-serif;font-size:10px;line-height:17px;color:#808080;font-weight:normal;white-space:pre;letter-spacing:-0.607px;">10 ms</div>
<div style="position:absolute;left:245px;top:458.5px;width:793.5px;height:181.5px;background:#2b2b2b;"></div>
<div style="position:absolute;left:1038.5px;top:457.5px;width:22.5px;height:182.5px;background:#3c3f41;"></div>
<svg style="position:absolute;left:247.5px;top:462px;" width="7" height="8" viewBox="0 0 7 8"><rect x="0.5" y="0.5" width="6" height="7" stroke="#6c6c6c" stroke-width="0.9" fill="none"/><path d="M2 4h3" stroke="#6c6c6c" stroke-width="0.9"/></svg>
<div style="position:absolute;left:0;top:0;width:1080px;height:675px;clip-path:inset(458.5px 41.5px 35px 245px)">
<div class="c" style="left:256px;top:460.00px;color:#bbbbbb"><span style="color:#8a8a8a;background:#3a3a3a">&lt;4 go setup calls&gt;</span></div>
<div class="c" style="left:256px;top:472.65px;color:#bbbbbb">=== RUN   TestSliceOutOfBound</div>
<div class="c" style="left:256px;top:485.30px;color:#bbbbbb">--- FAIL: TestSliceOutOfBound (0.00s)</div>
<div class="c" style="left:256px;top:497.95px;color:#bbbbbb">    <span class="lk">container_test.go:225</span>: s1 = [2 3 4 5], len(s1) = 4, cap(s1) = 6</div>
<div class="c" style="left:256px;top:510.60px;color:#bbbbbb">    <span class="lk">container_test.go:229</span>: s2 = [5 6], len(s2) = 2, cap(s2) = 3</div>
<div class="c" style="left:256px;top:523.25px;color:#bbbbbb">    <span class="lk">container_test.go:232</span>: 5</div>
<div class="c" style="left:256px;top:535.90px;color:#bbbbbb">panic: runtime error: index out of range [recovered]</div>
<div class="c" style="left:256px;top:548.55px;color:#bbbbbb">    panic: runtime error: index out of range</div>
<div class="c" style="left:256px;top:573.85px;color:#bbbbbb">goroutine 17 [running]:</div>
<div class="c" style="left:256px;top:586.50px;color:#bbbbbb">testing.tRunner.func1(0xc0000cc100)</div>
<div class="c" style="left:256px;top:599.15px;color:#bbbbbb">    <span class="lk">/usr/local/go/src/testing/testing.go:830</span> +0x392</div>
<div class="c" style="left:256px;top:611.80px;color:#bbbbbb">panic(0x111b760, 0x12390d0)</div>
<div class="c" style="left:256px;top:624.45px;color:#bbbbbb">    <span class="lk">/usr/local/go/src/runtime/panic.go:522</span> +0x1b5</div>
<div class="c" style="left:256px;top:637.10px;color:#bbbbbb">github.com/snowdreams1006/learn-go/container.TestSliceOutOfBound(0xc0000cc100)</div>
</div>
<svg style="position:absolute;left:1043px;top:465px;" width="13" height="12" viewBox="0 0 13 12"><circle cx="5" cy="8" r="3.5" fill="#5c5f61"/><circle cx="10" cy="4" r="1.5" fill="#5c5f61"/><path d="M6 3l1-3" stroke="#5c5f61"/></svg>
<svg style="position:absolute;left:1044.5px;top:488px;" width="9" height="10" viewBox="0 0 9 10"><path d="M4.5 10V1.2M0.8 4.5L4.5 0.8 8.2 4.5" stroke="#afb1b3" stroke-width="1.4" fill="none"/></svg>
<svg style="position:absolute;left:1044.5px;top:510px;" width="9" height="10" viewBox="0 0 9 10"><path d="M4.5 0v8.8M0.8 5.5l3.7 3.7 3.7-3.7" stroke="#afb1b3" stroke-width="1.4" fill="none"/></svg>
<svg style="position:absolute;left:1044px;top:531px;" width="11" height="11" viewBox="0 0 11 11"><path d="M0 1h11M0 5h8Q10.5 5 10.5 7.5T8 10H5" stroke="#afb1b3" stroke-width="1.2" fill="none"/><path d="M5.5 7.5L3 10l2.5 2.5z" fill="#afb1b3"/><path d="M0 9h2" stroke="#afb1b3" stroke-width="1.2"/></svg>
<svg style="position:absolute;left:1044px;top:552px;" width="11" height="11" viewBox="0 0 11 11"><path d="M0 1h5M0 4h5M0 7h5M0 10.5h11" stroke="#afb1b3" stroke-width="1.2"/><path d="M8 0v7M5.5 5l2.5 3 2.5-3" stroke="#afb1b3" stroke-width="1.2" fill="none"/></svg>
<svg style="position:absolute;left:1044px;top:575.5px;" width="11" height="11" viewBox="0 0 11 11"><rect x="2.5" y="0" width="6" height="3" fill="#afb1b3"/><rect x="0" y="3.5" width="11" height="4.5" fill="#afb1b3"/><rect x="2.5" y="7" width="6" height="4" fill="#afb1b3" stroke="#3c3f41" stroke-width=".8"/></svg>
<svg style="position:absolute;left:1045px;top:595.5px;" width="9" height="11" viewBox="0 0 9 11"><rect x="0" y="1" width="9" height="1.5" fill="#afb1b3"/><rect x="3" y="0" width="3" height="1" fill="#afb1b3"/><path d="M1 3.5h7l-.5 7.5h-6z" fill="#afb1b3"/></svg>
<div style="position:absolute;left:17px;top:640px;width:1061.5px;height:17px;background:#3c3f41;"></div>
<div style="position:absolute;left:17px;top:640px;width:1061.5px;height:0.8px;background:#323232;"></div>
<div style="position:absolute;left:16px;top:640.5px;width:57px;height:16.5px;background:#2d2f30;"></div>
<svg style="position:absolute;left:25.5px;top:644px;" width="9" height="10" viewBox="0 0 9 10"><path d="M0.5 0v10l8.5-5z" fill="#afb1b3"/></svg>
<div id="t62" style="position:absolute;left:38.5px;top:640px;font-family:'Liberation Sans', sans-serif;font-size:11px;line-height:17px;color:#d0d0d0;font-weight:normal;white-space:pre;letter-spacing:-0.820px;"><u>4</u>: Run</div>
<svg style="position:absolute;left:84px;top:643px;" width="11" height="11" viewBox="0 0 11 11"><ellipse cx="5.5" cy="6.5" rx="3.5" ry="4.2" fill="#afb1b3"/><circle cx="5.5" cy="2" r="1.8" fill="#afb1b3"/><path d="M0 3l2 1.5M11 3L9 4.5M0 7h2M11 7H9M0 11l2-1.5M11 11L9 9.5" stroke="#afb1b3"/></svg>
<div id="t63" style="position:absolute;left:97.25px;top:640px;font-family:'Liberation Sans', sans-serif;font-size:11px;line-height:17px;color:#bbbbbb;font-weight:normal;white-space:pre;letter-spacing:-0.738px;"><u>5</u>: Debug</div>
<svg style="position:absolute;left:156px;top:644px;" width="9" height="9" viewBox="0 0 9 9"><path d="M0 1h2M3 1h6M0 4.5h2M3 4.5h6M0 8h2M3 8h6" stroke="#afb1b3" stroke-width="1.4"/></svg>
<div id="t64" style="position:absolute;left:169px;top:640px;font-family:'Liberation Sans', sans-serif;font-size:11px;line-height:17px;color:#bbbbbb;font-weight:normal;white-space:pre;letter-spacing:-0.946px;"><u>6</u>: TODO</div>
<svg style="position:absolute;left:223px;top:643px;" width="11" height="11" viewBox="0 0 11 11"><rect width="11" height="11" fill="#afb1b3"/><path d="M2 3l3 2.5-3 2.5" stroke="#3c3f41" stroke-width="1.3" fill="none"/><path d="M5.5 8.5h3.5" stroke="#3c3f41" stroke-width="1.2"/></svg>
<div id="t65" style="position:absolute;left:238.5px;top:640px;font-family:'Liberation Sans', sans-serif;font-size:11px;line-height:17px;color:#bbbbbb;font-weight:normal;white-space:pre;letter-spacing:-0.572px;">Terminal</div>
<svg style="position:absolute;left:293px;top:644px;" width="11" height="10" viewBox="0 0 11 10"><path d="M5.5 0L11 10H0z" fill="#afb1b3"/><path d="M5.5 3.5v3.5M5.5 8v1" stroke="#3c3f41" stroke-width="1.2"/></svg>
<div id="t66" style="position:absolute;left:308px;top:640px;font-family:'Liberation Sans', sans-serif;font-size:11px;line-height:17px;color:#bbbbbb;font-weight:normal;white-space:pre;letter-spacing:-0.715px;">Problems</div>
<svg style="position:absolute;left:368px;top:643px;" width="11" height="11" viewBox="0 0 11 11"><path d="M2 0v11M2 3h4Q8 3 8 5v3" stroke="#afb1b3" stroke-width="1.4" fill="none"/><path d="M5.5 7l2.5 3 2.5-3z" fill="#afb1b3"/></svg>
<div id="t67" style="position:absolute;left:383px;top:640px;font-family:'Liberation Sans', sans-serif;font-size:11px;line-height:17px;color:#bbbbbb;font-weight:normal;white-space:pre;letter-spacing:-0.609px;"><u>9</u>: Version Control</div>
<svg style="position:absolute;left:894px;top:643px;" width="13" height="12" viewBox="0 0 13 12"><path d="M2.2 9.8A5.2 5.2 0 1 1 4.5 11.2L0.8 11.8z" stroke="#afb1b3" stroke-width="1.2" fill="none" stroke-linejoin="round"/></svg>
<div id="t68" style="position:absolute;left:909px;top:640px;font-family:'Liberation Sans', sans-serif;font-size:11px;line-height:17px;color:#bbbbbb;font-weight:normal;white-space:pre;letter-spacing:-0.816px;">Event Log</div>
<svg style="position:absolute;left:970px;top:642px;" width="12" height="13" viewBox="0 0 12 13"><path d="M1 12L2 6 11 0Q12 5 8 8L3 12z" fill="#8fc14a"/><rect x="6" y="8" width="5" height="5" fill="#e8e8e8"/></svg>
<div id="t69" style="position:absolute;left:984.9px;top:640px;font-family:'Liberation Sans', sans-serif;font-size:11px;line-height:17px;color:#bbbbbb;font-weight:normal;white-space:pre;letter-spacing:-0.811px;">JRebel Console</div>
<div style="position:absolute;left:0px;top:657px;width:1080px;height:18px;background:#3c3f41;"></div>
<div style="position:absolute;left:0px;top:657px;width:1080px;height:0.8px;background:#37393b;"></div>
<div style="position:absolute;left:0px;top:673.5px;width:1080px;height:1.5px;background:#2a2a2a;"></div>
<svg style="position:absolute;left:4px;top:659px;" width="12" height="12" viewBox="0 0 12 12"><rect x="3" y="0.5" width="8.5" height="8.5" stroke="#afb1b3" stroke-width="1" fill="none"/><path d="M1 3v8h8" stroke="#afb1b3" stroke-width="1" fill="none"/></svg>
<div id="t70" style="position:absolute;left:25.5px;top:658px;font-family:'Liberation Sans', sans-serif;font-size:11px;line-height:16px;color:#bbbbbb;font-weight:normal;white-space:pre;letter-spacing:-0.538px;">Tests failed: 1, passed: 0 (a minute ago)</div>
<div id="t71" style="position:absolute;left:764.7px;top:658px;font-family:'Liberation Sans', sans-serif;font-size:11px;line-height:16px;color:#bbbbbb;font-weight:normal;white-space:pre;letter-spacing:-0.506px;">234:5</div>
<div id="t72" style="position:absolute;left:800.5px;top:658px;font-family:'Liberation Sans', sans-serif;font-size:11px;line-height:16px;color:#bbbbbb;font-weight:normal;white-space:pre;letter-spacing:-1.872px;">LF</div>
<div id="t73" style="position:absolute;left:830px;top:658px;font-family:'Liberation Sans', sans-serif;font-size:11px;line-height:16px;color:#808080;font-weight:normal;white-space:pre;letter-spacing:-0.734px;">UTF-8</div>
<div id="t74" style="position:absolute;left:867.7px;top:658px;font-family:'Liberation Sans', sans-serif;font-size:11px;line-height:16px;color:#bbbbbb;font-weight:normal;white-space:pre;letter-spacing:-0.617px;">Tab</div>
<div id="t75" style="position:absolute;left:904.4px;top:658px;font-family:'Liberation Sans', sans-serif;font-size:11px;line-height:16px;color:#bbbbbb;font-weight:normal;white-space:pre;letter-spacing:-0.527px;">Git: master</div>
<svg style="position:absolute;left:813.6px;top:661px;" width="5" height="9" viewBox="0 0 5 9"><path d="M0 3.5L2.5 0 5 3.5zM0 5.5L2.5 9 5 5.5z" fill="#afb1b3"/></svg>
<svg style="position:absolute;left:887.6px;top:661px;" width="5" height="9" viewBox="0 0 5 9"><path d="M0 3.5L2.5 0 5 3.5zM0 5.5L2.5 9 5 5.5z" fill="#afb1b3"/></svg>
<svg style="position:absolute;left:957px;top:661px;" width="5" height="9" viewBox="0 0 5 9"><path d="M0 3.5L2.5 0 5 3.5zM0 5.5L2.5 9 5 5.5z" fill="#afb1b3"/></svg>
<svg style="position:absolute;left:969px;top:660px;" width="10" height="11" viewBox="0 0 10 11"><rect x="0" y="5" width="8" height="6" fill="#afb1b3"/><path d="M5 5V3Q5 .8 7 .8T9 3V4" stroke="#afb1b3" stroke-width="1.2" fill="none"/></svg>
<svg style="position:absolute;left:992px;top:659px;" width="12" height="13" viewBox="0 0 12 13"><path d="M2 5Q2 1 6 1T10 5z" fill="#afb1b3"/><rect x="0" y="5" width="12" height="1.5" fill="#afb1b3"/><circle cx="4" cy="9" r="2" fill="#afb1b3"/><circle cx="8" cy="9" r="2" fill="#afb1b3"/><path d="M2 13Q6 10 10 13" stroke="#afb1b3" fill="none"/></svg>
<div style="position:absolute;left:1007px;top:659px;width:12px;height:14px;background:#5a5d5f;"></div>
<div id="t76" style="position:absolute;left:1009.3px;top:658px;font-family:'Liberation Sans', sans-serif;font-size:11px;line-height:16px;color:#bbbbbb;font-weight:normal;white-space:pre;letter-spacing:-0.582px;">352 of 2014M</div>
</body></html>
